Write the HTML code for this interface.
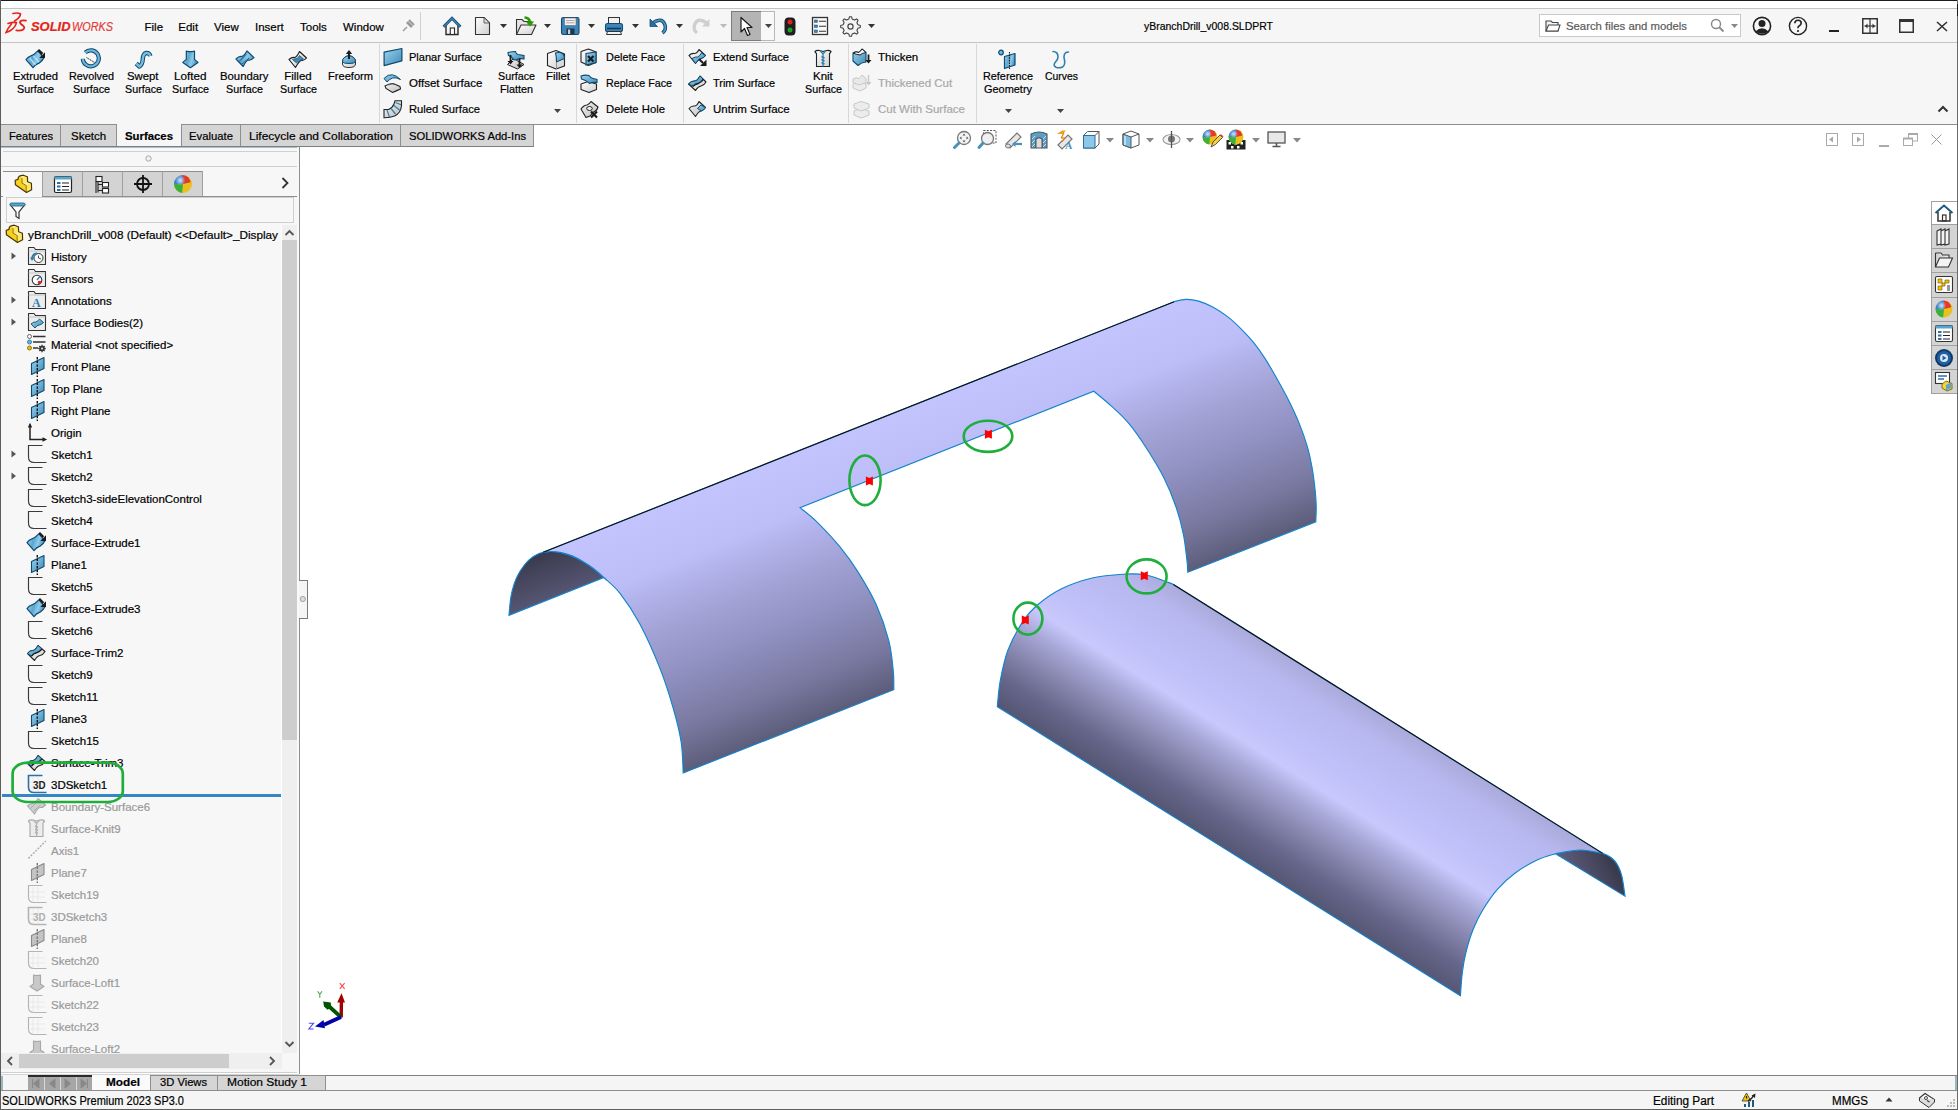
<!DOCTYPE html><html><head><meta charset="utf-8"><style>
html,body{margin:0;padding:0;width:1958px;height:1110px;overflow:hidden;background:#fff;}
body{position:relative;font-family:"Liberation Sans",sans-serif;}
.t{position:absolute;white-space:nowrap;line-height:16px;font-family:"Liberation Sans",sans-serif;-webkit-text-stroke:0.2px currentColor;}
.r{position:absolute;}
.s{position:absolute;overflow:visible;}

</style></head><body>
<div class="r" style="left:0px;top:0px;width:1958px;height:1px;background:#1c1c1c;"></div>
<div class="r" style="left:0px;top:1px;width:1958px;height:7px;background:#ffffff;"></div>
<div class="r" style="left:0px;top:8px;width:1958px;height:1px;background:#c3c3c3;"></div>
<div class="r" style="left:0px;top:9px;width:1958px;height:33px;background:#f6f6f6;"></div>
<div class="r" style="left:0px;top:42px;width:1958px;height:1px;background:#c3c3c3;"></div>
<div class="r" style="left:0px;top:43px;width:1958px;height:81px;background:#f6f6f6;"></div>
<div class="r" style="left:0px;top:124px;width:1958px;height:1px;background:#8e8e8e;"></div>
<div class="r" style="left:300px;top:125px;width:1657px;height:950px;background:#ffffff;"></div>
<div class="r" style="left:1px;top:125px;width:298px;height:949px;background:#f7f7f7;"></div>
<div class="r" style="left:299px;top:147px;width:1px;height:927px;background:#8e8e8e;"></div>
<svg width="0" height="0" style="position:absolute"><defs>
<linearGradient id="gb" x1="0" y1="0" x2="1" y2="0.3"><stop offset="0" stop-color="#a6dcf5"/><stop offset="0.45" stop-color="#5aa6d0"/><stop offset="0.7" stop-color="#8fcbea"/><stop offset="1" stop-color="#4d95c0"/></linearGradient>
<linearGradient id="gb2" x1="0" y1="0" x2="1" y2="1"><stop offset="0" stop-color="#9ad6f2"/><stop offset="1" stop-color="#3f88b6"/></linearGradient>
<linearGradient id="gw" x1="0" y1="0" x2="1" y2="1"><stop offset="0" stop-color="#ffffff"/><stop offset="1" stop-color="#cfcfcf"/></linearGradient>
<linearGradient id="gg" x1="0" y1="0" x2="1" y2="1"><stop offset="0" stop-color="#f4f4f4"/><stop offset="1" stop-color="#bdbdbd"/></linearGradient>
<radialGradient id="gball" cx="0.35" cy="0.3" r="0.7"><stop offset="0" stop-color="#fff" stop-opacity="0.8"/><stop offset="0.4" stop-color="#fff" stop-opacity="0"/></radialGradient>
</defs></svg>
<svg class="s" style="left:0px;top:0px;" width="120" height="40" viewBox="0 0 120 40">
<path d="M13 13.5Q18 12.3 20.5 14Q20.3 17.5 14.6 21" fill="none" stroke="#e1251b" stroke-width="1.7" stroke-linecap="round"/>
<path d="M8 23.4Q13 21.8 16.4 22.6Q15.6 27 10.5 30.5Q8 32 6 32.6Q7.5 28.5 11.5 24" fill="none" stroke="#e1251b" stroke-width="1.6" stroke-linecap="round"/>
<path d="M26 20.6Q21.5 20 20 21.6Q19.6 23.6 23 25.6Q25.6 27.6 22.8 29.8Q20 30.9 16.3 30.4" fill="none" stroke="#e1251b" stroke-width="1.8" stroke-linecap="round"/>
</svg>
<div class="t" style="left:31.0px;top:19.2px;font-size:12.5px;color:#e1251b;font-weight:bold;font-style:italic;transform:scaleX(1.0342);transform-origin:0 0;">SOLID</div>
<div class="t" style="left:72.0px;top:19.2px;font-size:12.5px;color:#e43a36;font-style:italic;transform:scaleX(0.8682);transform-origin:0 0;">WORKS</div>
<div class="t" style="left:144.5px;top:19.0px;font-size:11.5px;color:#000;">File</div>
<div class="t" style="left:178.3px;top:19.0px;font-size:11.5px;color:#000;">Edit</div>
<div class="t" style="left:214.0px;top:19.0px;font-size:11.5px;color:#000;">View</div>
<div class="t" style="left:255.0px;top:19.0px;font-size:11.5px;color:#000;">Insert</div>
<div class="t" style="left:300.0px;top:19.0px;font-size:11.5px;color:#000;">Tools</div>
<div class="t" style="left:343.0px;top:19.0px;font-size:11.5px;color:#000;">Window</div>
<svg class="s" style="left:400px;top:18px;" width="16" height="16" viewBox="0 0 16 16"><path d="M3 13L7 9" stroke="#999" stroke-width="1.5"/><path d="M6 5L11 10L13 8L8 3Z" fill="#999"/><path d="M9 2L14 7" stroke="#999" stroke-width="2"/></svg>
<div class="r" style="left:420px;top:12px;width:1px;height:28px;background:#d0d0d0;"></div>
<svg class="s" style="left:0px;top:0px;" width="900" height="42" viewBox="0 0 900 42">
<path d="M446 25V34.5H458V25" fill="#f4f4f4" stroke="#2a2a2a" stroke-width="1.4"/>
<rect x="450.3" y="28" width="4.2" height="6.5" fill="#fff" stroke="#2a2a2a" stroke-width="1.1"/>
<path d="M443.6 26.8L452 18.3L460.4 26.8" fill="none" stroke="#1b4f72" stroke-width="3"/>
<path d="M443.6 26.8L452 18.3L460.4 26.8" fill="none" stroke="#3b86b8" stroke-width="1.2"/>
<path d="M475.5 17.5H484L489.5 23V34.5H475.5Z" fill="url(#gw)" stroke="#333" stroke-width="1.1" stroke-linejoin="round"/>
<path d="M484 17.5V23H489.5Z" fill="#ddd" stroke="#444" stroke-width="0.8"/>
<path d="M516.5 19.5H522L524 21.5H531V34.5H516.5Z" fill="#e4e4e4" stroke="#333" stroke-width="1.1"/>
<path d="M516.5 34.5L521 25H536L531.5 34.5Z" fill="url(#gw)" stroke="#333" stroke-width="1.1" stroke-linejoin="round"/>
<path d="M524.5 17.5Q529.5 17.5 530 22.5" fill="none" stroke="#2a9a00" stroke-width="2.6"/>
<path d="M525.8 21.5H534.2L530 26.5Z" fill="#2a9a00"/>
<rect x="561.5" y="17.5" width="17.5" height="17" rx="1.8" fill="#3b85b8" stroke="#1a4a6e" stroke-width="1.1"/>
<rect x="564.5" y="18" width="11.5" height="7.5" fill="#f2f2f2" stroke="#666" stroke-width="0.6"/>
<path d="M566 20.5H574.5M566 22.8H574.5" stroke="#888" stroke-width="0.7"/>
<rect x="566.5" y="28.5" width="8" height="6" fill="#1c3850"/><rect x="568" y="29.5" width="2.2" height="4.5" fill="#d0d0d0"/>
<rect x="608.5" y="17.5" width="11" height="7" fill="#f0f0f0" stroke="#333" stroke-width="1"/>
<rect x="605.5" y="23.5" width="17" height="8" rx="2" fill="#3b85b8" stroke="#1a4a6e" stroke-width="1.1"/>
<path d="M607 28.5H621" stroke="#133a58" stroke-width="1.6"/>
<path d="M607.5 31.5H620.5L621.5 34.5H606.5Z" fill="#f2f2f2" stroke="#333" stroke-width="1"/>
<path d="M652.5 23Q662 16.5 665 25Q666.5 30 662.5 33" fill="none" stroke="#1b4f72" stroke-width="3.6"/>
<path d="M652.5 23Q662 16.5 665 25Q666.5 30 662.5 33" fill="none" stroke="#4a96c8" stroke-width="1.6"/>
<path d="M650 19V26.5H657.5Z" fill="#2a6fa0" stroke="#1b4f72" stroke-width="0.8"/>
<path d="M707 23Q697.5 16.5 694.5 25Q693 30 697 33" fill="none" stroke="#cfcfcf" stroke-width="3.4"/>
<path d="M709.5 19V26.5H702Z" fill="#cfcfcf"/>
<path d="M788.5 17.5H791.5Q795.5 17.5 795.5 22V31Q795.5 35.5 791.5 35.5H788.5Q784.5 35.5 784.5 31V22Q784.5 17.5 788.5 17.5Z" fill="#1e1e1e"/>
<circle cx="790" cy="22" r="2.5" fill="#e02020"/><circle cx="790" cy="30" r="2.5" fill="#20a020"/>
<rect x="812.5" y="17.5" width="15" height="17" fill="#f8f8f8" stroke="#333" stroke-width="1.3"/>
<rect x="814.5" y="20" width="3" height="2.5" fill="#3b85b8" stroke="#1a4a6e" stroke-width="0.5"/><rect x="814.5" y="25" width="3" height="2.5" fill="#3b85b8" stroke="#1a4a6e" stroke-width="0.5"/><rect x="814.5" y="30" width="3" height="2.5" fill="#3b85b8" stroke="#1a4a6e" stroke-width="0.5"/>
<path d="M819 21.2H826M819 26.2H826M819 31.2H826" stroke="#333" stroke-width="1.1"/>
<path d="M849.5 18.2L851.5 18.2L852.2 20.6L854.5 21.6L856.7 20.4L858.1 21.8L856.9 24L857.9 26.3L860.3 27L860.3 29L857.9 29.7L856.9 32L858.1 34.2L856.7 35.6L854.5 34.4L852.2 35.4L851.5 37.8L849.5 37.8L848.8 35.4L846.5 34.4L844.3 35.6L842.9 34.2L844.1 32L843.1 29.7L840.7 29L840.7 27L843.1 26.3L844.1 24L842.9 21.8L844.3 20.4L846.5 21.6L848.8 20.6Z" transform="translate(0,-1.5)" fill="#f4f4f4" stroke="#444" stroke-width="1.1" stroke-linejoin="round"/>
<circle cx="850.5" cy="26.5" r="2.6" fill="none" stroke="#444" stroke-width="1.2"/>
</svg>
<svg class="s" style="left:500px;top:24px;" width="7" height="4" viewBox="0 0 7 4"><path d="M0 0H7L3.5 4Z" fill="#333"/></svg>
<svg class="s" style="left:544px;top:24px;" width="7" height="4" viewBox="0 0 7 4"><path d="M0 0H7L3.5 4Z" fill="#333"/></svg>
<svg class="s" style="left:588px;top:24px;" width="7" height="4" viewBox="0 0 7 4"><path d="M0 0H7L3.5 4Z" fill="#333"/></svg>
<svg class="s" style="left:632px;top:24px;" width="7" height="4" viewBox="0 0 7 4"><path d="M0 0H7L3.5 4Z" fill="#333"/></svg>
<svg class="s" style="left:676px;top:24px;" width="7" height="4" viewBox="0 0 7 4"><path d="M0 0H7L3.5 4Z" fill="#333"/></svg>
<svg class="s" style="left:720px;top:24px;" width="7" height="4" viewBox="0 0 7 4"><path d="M0 0H7L3.5 4Z" fill="#bbb"/></svg>
<svg class="s" style="left:868px;top:24px;" width="7" height="4" viewBox="0 0 7 4"><path d="M0 0H7L3.5 4Z" fill="#333"/></svg>
<div class="r" style="left:731px;top:11px;width:31px;height:30px;background:#b4b4b4;border:1px solid #7c7c7c;box-sizing:border-box"></div>
<div class="r" style="left:761px;top:11px;width:14px;height:30px;background:#f8f8f8;border:1px solid #b8b8b8;border-left:none;box-sizing:border-box"></div>
<svg class="s" style="left:739px;top:16px;" width="16" height="22" viewBox="0 0 16 22"><path d="M2 1.5V16L5.5 12.5L8.5 19.5L11 18.5L8 11.5H13Z" fill="#fff" stroke="#1a1a1a" stroke-width="1.2" stroke-linejoin="round"/></svg>
<svg class="s" style="left:765px;top:24px;" width="7" height="4" viewBox="0 0 7 4"><path d="M0 0H7L3.5 4Z" fill="#444"/></svg>
<div class="t" style="left:1144.0px;top:18.0px;font-size:11.5px;color:#000;transform:scaleX(0.9105);transform-origin:0 0;">yBranchDrill_v008.SLDPRT</div>
<div class="r" style="left:1539px;top:14px;width:202px;height:23px;background:#ffffff;border:1px solid #c9c9c9;box-sizing:border-box"></div>
<svg class="s" style="left:1545px;top:19px;" width="16" height="13" viewBox="0 0 16 13"><path d="M1 2H6L7.5 3.5H13V12H1Z" fill="#f4f4f4" stroke="#444" stroke-width="1.1"/><path d="M1 12L3.5 6H15L13 12Z" fill="#fff" stroke="#444" stroke-width="1.1"/></svg>
<div class="t" style="left:1566.0px;top:18.0px;font-size:11.5px;color:#5a5a5a;transform:scaleX(0.9859);transform-origin:0 0;">Search files and models</div>
<svg class="s" style="left:1710px;top:18px;" width="15" height="15" viewBox="0 0 15 15"><circle cx="6" cy="6" r="4.5" fill="none" stroke="#888" stroke-width="1.4"/><path d="M9.5 9.5L13.5 13.5" stroke="#888" stroke-width="1.8"/></svg>
<svg class="s" style="left:1731px;top:24px;" width="7" height="4" viewBox="0 0 7 4"><path d="M0 0H7L3.5 4Z" fill="#888"/></svg>
<svg class="s" style="left:1752px;top:16px;" width="20" height="20" viewBox="0 0 20 20"><circle cx="10" cy="10" r="8.6" fill="none" stroke="#222" stroke-width="1.6"/><circle cx="10" cy="7.5" r="3.5" fill="#222"/><path d="M3.5 15.5Q10 9 16.5 15.5Q10 20 3.5 15.5Z" fill="#222"/></svg>
<svg class="s" style="left:1788px;top:16px;" width="20" height="20" viewBox="0 0 20 20"><circle cx="10" cy="10" r="8.6" fill="none" stroke="#222" stroke-width="1.4"/><path d="M6.8 7.3Q7 4.3 10 4.3Q13.2 4.3 13.2 7Q13.2 9 10.8 10.2Q10 10.8 10 12.3" fill="none" stroke="#222" stroke-width="1.6"/><circle cx="10" cy="15" r="1.1" fill="#222"/></svg>
<div class="r" style="left:1829px;top:30px;width:10px;height:2px;background:#222;"></div>
<svg class="s" style="left:1862px;top:18px;" width="16" height="16" viewBox="0 0 16 16"><rect x="0.75" y="0.75" width="14.5" height="14.5" fill="none" stroke="#333" stroke-width="1.5"/><path d="M8 1V15" stroke="#333" stroke-width="1.2"/><path d="M2.5 8H13.5" stroke="#333" stroke-width="1.2"/><path d="M3 8L5.5 5.5V10.5Z M13 8L10.5 5.5V10.5Z" fill="#333"/></svg>
<svg class="s" style="left:1899px;top:19px;" width="15" height="14" viewBox="0 0 15 14"><rect x="0.75" y="0.75" width="13.5" height="12.5" fill="none" stroke="#333" stroke-width="1.5"/><rect x="0" y="0" width="15" height="3" fill="#333"/></svg>
<svg class="s" style="left:1936px;top:21px;" width="12" height="11" viewBox="0 0 12 11"><path d="M1 1L11 10M11 1L1 10" stroke="#333" stroke-width="1.6"/></svg>
<div class="t" style="left:12.5px;top:68.0px;font-size:11.5px;color:#000;transform:scaleX(0.9776);transform-origin:0 0;">Extruded</div>
<div class="t" style="left:16.5px;top:81.0px;font-size:11.5px;color:#000;transform:scaleX(0.9336);transform-origin:0 0;">Surface</div>
<svg class="s" style="left:25px;top:49px;" width="20" height="20" viewBox="0 0 20 20"><path d="M1 10.6C2.5 8.5 4.3 7.4 6 6.8C8 6.3 9.5 5 11.2 3.3L13 1.9L19 8.8C18 11 17 12.3 14 14.2C12 15 10 15.5 8 18.7Z" fill="url(#gb)" stroke="#0f4a6e" stroke-width="1.2" stroke-linejoin="round"/>
<path d="M5 9.5L10.5 16M8.5 7L14 13" stroke="#cdeaf8" stroke-width="1.2" opacity="0.8"/>
<path d="M13.2 0.8L17.4 5" stroke="#1a1a1a" stroke-width="2.5"/><path d="M20 3.2V8.9H14.3Z" fill="#1a1a1a"/></svg>
<div class="t" style="left:68.5px;top:68.0px;font-size:11.5px;color:#000;transform:scaleX(0.9386);transform-origin:0 0;">Revolved</div>
<div class="t" style="left:72.5px;top:81.0px;font-size:11.5px;color:#000;transform:scaleX(0.9336);transform-origin:0 0;">Surface</div>
<svg class="s" style="left:81px;top:49px;" width="20" height="20" viewBox="0 0 20 20"><path d="M4.2 3.6A8 8 0 1 1 1.8 9.8" fill="none" stroke="#0f4a6e" stroke-width="4.2"/>
<path d="M4.2 3.6A8 8 0 1 1 1.8 9.8" fill="none" stroke="#6db5dc" stroke-width="2.2"/>
<path d="M5.5 8.5L14 13.8" stroke="#1a1a1a" stroke-width="0.9" stroke-dasharray="1.4 0.6"/></svg>
<div class="t" style="left:127.2px;top:68.0px;font-size:11.5px;color:#000;transform:scaleX(0.9855);transform-origin:0 0;">Swept</div>
<div class="t" style="left:124.5px;top:81.0px;font-size:11.5px;color:#000;transform:scaleX(0.9336);transform-origin:0 0;">Surface</div>
<svg class="s" style="left:133px;top:49px;" width="20" height="20" viewBox="0 0 20 20"><path d="M3.2 14.5L6.5 17.5Q9.5 15.5 9.8 10Q10.2 4.5 13.2 4Q16.5 3.8 17.3 7" fill="none" stroke="#0f4a6e" stroke-width="4.4" stroke-linejoin="round"/>
<path d="M3.2 14.5L6.5 17.5Q9.5 15.5 9.8 10Q10.2 4.5 13.2 4Q16.5 3.8 17.3 7" fill="none" stroke="#79bde0" stroke-width="2.4" stroke-linejoin="round"/></svg>
<div class="t" style="left:174.2px;top:68.0px;font-size:11.5px;color:#000;transform:scaleX(1.0164);transform-origin:0 0;">Lofted</div>
<div class="t" style="left:172.0px;top:81.0px;font-size:11.5px;color:#000;transform:scaleX(0.9336);transform-origin:0 0;">Surface</div>
<svg class="s" style="left:180px;top:49px;" width="20" height="20" viewBox="0 0 20 20"><path d="M6.3 2.1Q10.4 3.2 14.5 2.1V10.4L18 13.4L10.4 18.7L2.8 13.4L6.3 10.4Z" fill="url(#gb)" stroke="#0f4a6e" stroke-width="1.2" stroke-linejoin="round"/></svg>
<div class="t" style="left:220.4px;top:68.0px;font-size:11.5px;color:#000;transform:scaleX(0.9852);transform-origin:0 0;">Boundary</div>
<div class="t" style="left:226.2px;top:81.0px;font-size:11.5px;color:#000;transform:scaleX(0.9336);transform-origin:0 0;">Surface</div>
<svg class="s" style="left:235px;top:49px;" width="20" height="20" viewBox="0 0 20 20"><path d="M1 10Q4 7 6.5 7.5Q9 7 12 2L19 8.6Q16 11.5 13.5 11Q11 11.5 8.2 17.5Z" fill="url(#gb)" stroke="#0f4a6e" stroke-width="1.2" stroke-linejoin="round"/>
<path d="M4 12.5L11 5.5M7 15L14 9" stroke="#0f4a6e" stroke-width="0.9"/></svg>
<div class="t" style="left:284.2px;top:68.0px;font-size:11.5px;color:#000;">Filled</div>
<div class="t" style="left:279.5px;top:81.0px;font-size:11.5px;color:#000;transform:scaleX(0.9336);transform-origin:0 0;">Surface</div>
<svg class="s" style="left:288px;top:49px;" width="20" height="20" viewBox="0 0 20 20"><path d="M1 10.5Q4 8 6.5 8.5Q9 8 11.5 2.5L18.5 9Q16 12 13.5 11.5Q11 12 7.5 18.5Z" fill="url(#gw)" stroke="#1a1a1a" stroke-width="1.1" stroke-linejoin="round"/>
<path d="M4.5 10.5Q7 9.5 9 9.5Q10.5 8.5 11.5 6.5L15.5 10Q13 11.5 11.5 11.5Q9.5 12.5 8.5 14Z" fill="#3f8ab8" stroke="#0f4a6e" stroke-width="0.7"/></svg>
<div class="t" style="left:327.5px;top:68.0px;font-size:11.5px;color:#000;transform:scaleX(0.9647);transform-origin:0 0;">Freeform</div>
<svg class="s" style="left:340px;top:49px;" width="20" height="20" viewBox="0 0 20 20"><path d="M2.5 12.5Q2.5 8 9 6.5Q15.5 8 15.5 12.5V15Q15.5 18.5 9 18.5Q2.5 18.5 2.5 15Z" fill="url(#gw)" stroke="#333" stroke-width="1"/>
<path d="M2.5 12.5Q2.5 8 9 6.5Q15.5 8 15.5 12.5Q15 14.5 9 14.5Q3 14.5 2.5 12.5Z" fill="url(#gb2)" stroke="#0f4a6e" stroke-width="1"/>
<path d="M9 10V3" stroke="#1a1a1a" stroke-width="2"/><path d="M5.8 5H12.2L9 1Z" fill="#1a1a1a"/></svg>
<div class="r" style="left:379px;top:44px;width:1px;height:79px;background:#d8d8d8;"></div>
<div class="t" style="left:409.0px;top:49.0px;font-size:11.5px;color:#000;transform:scaleX(0.9596);transform-origin:0 0;">Planar Surface</div>
<div class="t" style="left:409.0px;top:75.0px;font-size:11.5px;color:#000;">Offset Surface</div>
<div class="t" style="left:409.0px;top:101.0px;font-size:11.5px;color:#000;transform:scaleX(0.9743);transform-origin:0 0;">Ruled Surface</div>
<svg class="s" style="left:383px;top:48px;" width="19" height="19" viewBox="0 0 19 19"><path d="M1.1 4.2L18.9 0.5V12.8L1.1 17.6Z" fill="url(#gb2)" stroke="#0f4a6e" stroke-width="1.2" stroke-linejoin="round"/></svg>
<svg class="s" style="left:383px;top:74px;" width="19" height="19" viewBox="0 0 19 19"><path d="M2 12Q6 9.5 9.5 9.5Q13 10.5 17 12.5L17.5 15Q13 17 9.5 18.5L3 14.5Z" fill="url(#gg)" stroke="#222" stroke-width="1.1"/>
<path d="M5.5 11Q9.5 8.5 13 10.5" fill="none" stroke="#555" stroke-width="0.9"/>
<path d="M1 4.5Q5 0 9.5 0.8Q13.5 1.5 17.5 5.5Q13 3 9.5 4Q6 5.5 4 8Z" fill="url(#gb2)" stroke="#0f4a6e" stroke-width="1"/></svg>
<svg class="s" style="left:383px;top:100px;" width="19" height="19" viewBox="0 0 19 19"><path d="M1 9.5H5.5Q9.5 8 11 4Q12 1.5 12 0.7H18.5V5.5Q18 13 11.5 16Q7 17.8 1 17.7Z" fill="url(#gg)" stroke="#222" stroke-width="1.1"/>
<path d="M4 10L6.5 17M8 8.5L12.5 14M11 5.5L16.5 10M12.5 2.5L18 4.8" stroke="#2f7fae" stroke-width="1.2"/></svg>
<div class="t" style="left:497.5px;top:68.0px;font-size:11.5px;color:#000;transform:scaleX(0.9336);transform-origin:0 0;">Surface</div>
<div class="t" style="left:499.5px;top:81.0px;font-size:11.5px;color:#000;transform:scaleX(0.9386);transform-origin:0 0;">Flatten</div>
<svg class="s" style="left:506px;top:49px;" width="20" height="20" viewBox="0 0 20 20"><path d="M1.5 15.5L7.5 9.5L18 15.5L11.5 20Z" fill="url(#gg)" stroke="#222" stroke-width="1"/>
<path d="M2 3.5Q6 2.5 9.5 2.5Q10 5 12 5.5L18 6.5V10Q14 9 11 10.5L8 11Q6.5 8 2.5 6.5Z" fill="url(#gb2)" stroke="#0f4a6e" stroke-width="1.1"/>
<path d="M4.5 6V13M13.5 9.5V16.5" stroke="#1a1a1a" stroke-width="1.8"/><path d="M1.5 12H7.5L4.5 15.5ZM10.5 15.5H16.5L13.5 19Z" fill="#1a1a1a"/></svg>
<div class="t" style="left:545.5px;top:68.0px;font-size:11.5px;color:#000;transform:scaleX(0.9884);transform-origin:0 0;">Fillet</div>
<svg class="s" style="left:546px;top:49px;" width="20" height="20" viewBox="0 0 20 20"><path d="M1.5 4.5L10 1.5L18.5 5V17L10 20L1.5 16.5Z" fill="url(#gw)" stroke="#222" stroke-width="1.1" stroke-linejoin="round"/>
<path d="M9.5 4Q14 2.5 17 5Q18.5 7 18.5 9.5L10.5 13Q10.5 7 9.5 4Z" fill="url(#gb2)" stroke="#0f4a6e" stroke-width="1.1"/>
<path d="M10.5 13V20" stroke="#888" stroke-width="0.9"/></svg>
<svg class="s" style="left:554px;top:109px;" width="7" height="4" viewBox="0 0 7 4"><path d="M0 0H7L3.5 4Z" fill="#444"/></svg>
<div class="r" style="left:576px;top:44px;width:1px;height:79px;background:#d8d8d8;"></div>
<div class="t" style="left:606.0px;top:49.0px;font-size:11.5px;color:#000;transform:scaleX(0.9515);transform-origin:0 0;">Delete Face</div>
<svg class="s" style="left:580px;top:48px;" width="19" height="19" viewBox="0 0 19 19"><path d="M1 3.5L8.5 1L16 4V14.5L8.5 17.5L1 14Z" fill="url(#gw)" stroke="#222" stroke-width="1.1" stroke-linejoin="round"/>
<path d="M6 5.5L16 4V14.5L6 17Z" fill="url(#gb2)" stroke="#0f4a6e" stroke-width="1.1"/>
<path d="M8 8L13.5 13.5M13.5 8L8 13.5" stroke="#1a1a1a" stroke-width="2.2"/></svg>
<div class="t" style="left:606.0px;top:75.0px;font-size:11.5px;color:#000;transform:scaleX(0.9302);transform-origin:0 0;">Replace Face</div>
<svg class="s" style="left:580px;top:74px;" width="19" height="19" viewBox="0 0 19 19"><path d="M1 10L8 7.5L16.5 10V15.5L9 18.5L1 15.5Z" fill="url(#gw)" stroke="#222" stroke-width="1.1" stroke-linejoin="round"/>
<path d="M1 2Q5 0.5 9 1.5Q10.5 4 13 4.5L17 5.5V8.5Q12 8 9.5 9.5Q7.5 7 1.5 5Z" fill="url(#gb2)" stroke="#0f4a6e" stroke-width="1.1"/></svg>
<div class="t" style="left:606.0px;top:101.0px;font-size:11.5px;color:#000;transform:scaleX(0.9819);transform-origin:0 0;">Delete Hole</div>
<svg class="s" style="left:580px;top:100px;" width="19" height="19" viewBox="0 0 19 19"><path d="M1 9Q4 5 7 5Q9 4.5 11 1.5L18 7Q17 10.5 15 11Q13 12 10 16L6 17.5Z" fill="url(#gg)" stroke="#222" stroke-width="1.1" stroke-linejoin="round"/>
<ellipse cx="9.5" cy="8.5" rx="2.8" ry="2" fill="#f0f0f0" stroke="#222" stroke-width="1"/>
<path d="M11 11.5L17 17.5M17 11.5L11 17.5" stroke="#1a1a1a" stroke-width="2.2"/></svg>
<div class="r" style="left:683px;top:44px;width:1px;height:79px;background:#d8d8d8;"></div>
<div class="t" style="left:713.0px;top:49.0px;font-size:11.5px;color:#000;transform:scaleX(0.9665);transform-origin:0 0;">Extend Surface</div>
<svg class="s" style="left:688px;top:48px;" width="19" height="19" viewBox="0 0 19 19"><path d="M1 7.5Q3.5 5 6.5 5.5Q9 5.5 11 1.5L17.5 7.5Q15.5 10 13 10.5Q10.5 11 7.5 15.5Z" fill="url(#gw)" stroke="#222" stroke-width="1.1" stroke-linejoin="round"/>
<path d="M4 10.5Q7.5 8.5 9.5 9Q11.5 8.5 13.5 5L17.5 7.5Q15.5 10 13 10.5Q10.5 11 7.5 15.5Z" fill="url(#gb2)" stroke="#0f4a6e" stroke-width="1"/>
<path d="M11 11L15 15" stroke="#1a1a1a" stroke-width="2"/><path d="M12 18H18.5V11.5Z" fill="#1a1a1a"/></svg>
<div class="t" style="left:713.0px;top:75.0px;font-size:11.5px;color:#000;transform:scaleX(0.9481);transform-origin:0 0;">Trim Surface</div>
<svg class="s" style="left:688px;top:74px;" width="19" height="19" viewBox="0 0 19 19"><path d="M0.5 10Q3.5 6.5 7 7Q9.5 7 12 2L18 8Q16 11.5 13 12Q10 12.5 7.5 16.5Z" fill="url(#gw)" stroke="#222" stroke-width="1.1" stroke-linejoin="round"/>
<path d="M0.5 10Q3.5 6.5 7 7Q9.5 7 12 2L15 5Q13 8 10.5 9Q7.5 9.5 5 12Z" fill="url(#gb2)" stroke="#0f4a6e" stroke-width="1"/>
<path d="M4.5 12.5Q7.5 10 10.5 9.5Q13.5 8.5 15.5 5.5" fill="none" stroke="#222" stroke-width="1.3"/></svg>
<div class="t" style="left:713.0px;top:101.0px;font-size:11.5px;color:#000;">Untrim Surface</div>
<svg class="s" style="left:688px;top:100px;" width="19" height="19" viewBox="0 0 19 19"><path d="M1 8.5Q3.5 5.5 6.5 6Q9 6 11 1.5L17.5 7.5Q15.5 10.5 13 11Q10.5 11.5 7.5 16.5Z" fill="url(#gg)" stroke="#222" stroke-width="1.1" stroke-linejoin="round"/>
<path d="M9.5 8.5L13 5L17.5 7.5Q16 10 13.5 11Z" fill="url(#gb2)" stroke="#0f4a6e" stroke-width="1"/></svg>
<div class="t" style="left:813.0px;top:68.0px;font-size:11.5px;color:#000;">Knit</div>
<div class="t" style="left:804.5px;top:81.0px;font-size:11.5px;color:#000;transform:scaleX(0.9336);transform-origin:0 0;">Surface</div>
<svg class="s" style="left:813px;top:49px;" width="20" height="20" viewBox="0 0 20 20"><path d="M2 2.5Q3.5 1 6.5 1.5L10 2.5L13.5 1.5Q16.5 1 18 2.5Q17.5 4 16.5 4.5V17.5H3.5V4.5Q2.5 4 2 2.5Z" fill="url(#gw)" stroke="#222" stroke-width="1.1"/>
<path d="M7 1.5L10 5L13 1.5M10 5V17.5" fill="none" stroke="#2f7fae" stroke-width="1.3"/>
<path d="M8.5 7.5L11.5 9M8.5 10.5L11.5 12M8.5 13.5L11.5 15" stroke="#2f7fae" stroke-width="1.5"/></svg>
<div class="r" style="left:848px;top:44px;width:1px;height:79px;background:#d8d8d8;"></div>
<div class="t" style="left:878.0px;top:49.0px;font-size:11.5px;color:#000;">Thicken</div>
<svg class="s" style="left:852px;top:48px;" width="19" height="19" viewBox="0 0 19 19"><path d="M1 5Q4 3 7 4.5Q9.5 2 10 1L14 4.5V14Q9 14.5 6 17.5L1 13Z" fill="url(#gb2)" stroke="#0f4a6e" stroke-width="1.1" stroke-linejoin="round"/>
<path d="M1 5Q4 3 7 4.5Q9.5 2 10 1L14 4.5Q10 5 8 7Q4 6.5 1 5Z" fill="#f4f4f4" stroke="#222" stroke-width="1"/>
<path d="M16.5 6.5V13" stroke="#1a1a1a" stroke-width="1.8"/><path d="M13.5 12H19.5L16.5 15.5Z" fill="#1a1a1a"/></svg>
<div class="t" style="left:878.0px;top:75.0px;font-size:11.5px;color:#a8a8a8;">Thickened Cut</div>
<svg class="s" style="left:852px;top:74px;" width="19" height="19" viewBox="0 0 19 19"><path d="M1 10L8 7.5L14 10V14L8 17L1 14Z" fill="#ececec" stroke="#c8c8c8" stroke-width="1"/>
<path d="M1 5Q4 3 7 4.5Q9.5 2 10 1L14 4.5V9Q10 9.5 7 11L1 8.5Z" fill="#e8e8e8" stroke="#c8c8c8" stroke-width="1"/>
<path d="M16.5 1V9" stroke="#c8c8c8" stroke-width="1.5"/><path d="M13.5 8H19.5L16.5 11.5Z" fill="#c8c8c8"/></svg>
<div class="t" style="left:878.0px;top:101.0px;font-size:11.5px;color:#a8a8a8;">Cut With Surface</div>
<svg class="s" style="left:852px;top:100px;" width="19" height="19" viewBox="0 0 19 19"><path d="M2 11L9 8.5L17 11V15L9 18L2 15Z" fill="#ececec" stroke="#c8c8c8" stroke-width="1"/>
<path d="M2 4L9 1.5L17 4V8L9 11L2 8Z" fill="#ececec" stroke="#c8c8c8" stroke-width="1"/></svg>
<div class="r" style="left:976px;top:44px;width:1px;height:79px;background:#d8d8d8;"></div>
<div class="t" style="left:983.0px;top:68.0px;font-size:11.5px;color:#000;transform:scaleX(0.9423);transform-origin:0 0;">Reference</div>
<div class="t" style="left:984.0px;top:81.0px;font-size:11.5px;color:#000;transform:scaleX(0.9507);transform-origin:0 0;">Geometry</div>
<svg class="s" style="left:998px;top:49px;" width="20" height="20" viewBox="0 0 20 20"><circle cx="3" cy="3.5" r="2.3" fill="#6ab8e0" stroke="#0f4a6e" stroke-width="1.2"/>
<path d="M6.5 7.5L17 4.5V16L6.5 19.5Z" fill="url(#gb)" stroke="#0f4a6e" stroke-width="1.2" stroke-linejoin="round"/>
<path d="M11.5 3V20" stroke="#1a1a1a" stroke-width="1.1" stroke-dasharray="1.6 1"/></svg>
<svg class="s" style="left:1005px;top:109px;" width="7" height="4" viewBox="0 0 7 4"><path d="M0 0H7L3.5 4Z" fill="#444"/></svg>
<div class="t" style="left:1044.5px;top:68.0px;font-size:11.5px;color:#000;transform:scaleX(0.9059);transform-origin:0 0;">Curves</div>
<svg class="s" style="left:1050px;top:49px;" width="20" height="20" viewBox="0 0 20 20"><path d="M3 2.5Q8 2.5 8 8Q8 10.5 5.5 13Q2.5 16.5 6 18.2Q9 19.5 12.5 18Q15.5 16 14.5 11Q13.5 7.5 14.5 5Q15.5 3 18.5 3" fill="none" stroke="#2f7fae" stroke-width="1.6" stroke-linecap="round"/></svg>
<svg class="s" style="left:1057px;top:109px;" width="7" height="4" viewBox="0 0 7 4"><path d="M0 0H7L3.5 4Z" fill="#444"/></svg>
<svg class="s" style="left:1937px;top:105px;" width="12" height="8" viewBox="0 0 12 8"><path d="M1.5 6.5L6 2L10.5 6.5" fill="none" stroke="#333" stroke-width="2"/></svg>
<div class="r" style="left:1px;top:125px;width:533px;height:21px;background:#d5d5d5;"></div>
<div class="r" style="left:1px;top:146px;width:533px;height:1px;background:#7e7e7e;"></div>
<div class="r" style="left:117px;top:124px;width:64px;height:22px;background:#f6f6f6;"></div>
<div class="r" style="left:60px;top:125px;width:1px;height:21px;background:#8e8e8e;"></div>
<div class="r" style="left:116px;top:125px;width:1px;height:21px;background:#8e8e8e;"></div>
<div class="r" style="left:181px;top:125px;width:1px;height:21px;background:#8e8e8e;"></div>
<div class="r" style="left:240px;top:125px;width:1px;height:21px;background:#8e8e8e;"></div>
<div class="r" style="left:400px;top:125px;width:1px;height:21px;background:#8e8e8e;"></div>
<div class="r" style="left:533px;top:125px;width:1px;height:21px;background:#8e8e8e;"></div>
<div class="r" style="left:534px;top:124px;width:1px;height:1px;background:#8e8e8e;"></div>
<div class="t" style="left:9.0px;top:128.0px;font-size:11.5px;color:#000;transform:scaleX(0.9695);transform-origin:0 0;">Features</div>
<div class="t" style="left:71.0px;top:128.0px;font-size:11.5px;color:#000;">Sketch</div>
<div class="t" style="left:125.0px;top:128.0px;font-size:11.5px;color:#000;font-weight:bold;transform:scaleX(0.9880);transform-origin:0 0;">Surfaces</div>
<div class="t" style="left:189.0px;top:128.0px;font-size:11.5px;color:#000;transform:scaleX(0.9831);transform-origin:0 0;">Evaluate</div>
<div class="t" style="left:249.0px;top:128.0px;font-size:11.5px;color:#000;transform:scaleX(1.0428);transform-origin:0 0;">Lifecycle and Collaboration</div>
<div class="t" style="left:409.0px;top:128.0px;font-size:11.5px;color:#000;transform:scaleX(0.9738);transform-origin:0 0;">SOLIDWORKS Add-Ins</div>
<div class="r" style="left:534px;top:125px;width:1423px;height:22px;background:#ffffff;"></div>
<div class="r" style="left:1px;top:147px;width:298px;height:1px;background:#a9c4cc;"></div>
<div class="r" style="left:3px;top:151px;width:294px;height:1px;background:#d0d0d0;"></div>
<svg class="s" style="left:145px;top:155px;" width="7" height="7" viewBox="0 0 7 7"><circle cx="3.5" cy="3.5" r="2.7" fill="#f0f0f0" stroke="#aaa"/></svg>
<div class="r" style="left:1px;top:166px;width:296px;height:1px;background:#cfcfcf;"></div>
<div class="r" style="left:3px;top:171px;width:200px;height:1px;background:#8e8e8e;"></div>
<div class="r" style="left:42px;top:172px;width:160px;height:24px;background:#d3d3d3;"></div>
<div class="r" style="left:42px;top:171px;width:1px;height:25px;background:#a0a0a0;"></div>
<div class="r" style="left:82px;top:171px;width:1px;height:25px;background:#a0a0a0;"></div>
<div class="r" style="left:122px;top:171px;width:1px;height:25px;background:#a0a0a0;"></div>
<div class="r" style="left:162px;top:171px;width:1px;height:25px;background:#a0a0a0;"></div>
<div class="r" style="left:202px;top:171px;width:1px;height:25px;background:#a0a0a0;"></div>
<div class="r" style="left:1px;top:196px;width:296px;height:1px;background:#8e8e8e;"></div>
<div class="r" style="left:3px;top:196px;width:39px;height:1px;background:#f7f7f7;"></div>
<svg class="s" style="left:14px;top:174px;" width="20" height="20" viewBox="0 0 20 20"><path d="M1.2 6.3L4 5.4L4.3 3.3L5.4 2.1L9.2 1.2L13.4 2.8L13.6 7.7L17.4 9.3L17.6 15.7L12.5 18.5L1.4 10.8Z" fill="#f7d020"/><path d="M8 4L13.4 2.8L13.6 7.7L8.2 9.1Z M12.2 11.5L17.4 9.3L17.6 15.7L12.5 18.5Z" fill="#ffe860"/><path d="M5.4 2.1L9.2 1.2L13.4 2.8L8 4Z M8.2 9.1L13.6 7.7L17.4 9.3L12.2 11.5Z" fill="#fff0a0"/><path d="M8 4V9.1L12.2 11.5V18.3" fill="none" stroke="#8a6a10" stroke-width="0.9"/><path d="M1.2 6.3L4 5.4L4.3 3.3L5.4 2.1L9.2 1.2L13.4 2.8L13.6 7.7L17.4 9.3L17.6 15.7L12.5 18.5L1.4 10.8Z" fill="none" stroke="#4a3400" stroke-width="1.2" stroke-linejoin="round"/></svg>
<svg class="s" style="left:53px;top:175px;" width="20" height="19" viewBox="0 0 20 19"><rect x="1.5" y="1.5" width="17" height="16" rx="1.5" fill="#fff" stroke="#222" stroke-width="1.2"/><rect x="1.5" y="1.5" width="17" height="3" fill="#5aa5cc"/><rect x="4" y="7" width="3.5" height="2" fill="#2f6f9f"/><rect x="4" y="10.5" width="3.5" height="2" fill="#2f6f9f"/><rect x="4" y="14" width="3.5" height="2" fill="#2f6f9f"/><path d="M9 8H16M9 11.5H16M9 15H16" stroke="#222" stroke-width="1.1"/></svg>
<svg class="s" style="left:94px;top:175px;" width="18" height="19" viewBox="0 0 18 19"><rect x="2" y="1.5" width="6" height="5" fill="#fff" stroke="#222" stroke-width="1.1"/><rect x="8.5" y="7.5" width="6" height="4.5" fill="#fff" stroke="#222" stroke-width="1.1"/><rect x="8.5" y="13.5" width="6" height="4.5" fill="#fff" stroke="#222" stroke-width="1.1"/><path d="M4 6.5V17.5M4 9.5H8.5M4 15.5H8.5" stroke="#222" stroke-width="1.1"/><path d="M2 6.5V18" stroke="#222" stroke-width="1.1"/></svg>
<svg class="s" style="left:133px;top:174px;" width="20" height="20" viewBox="0 0 20 20"><circle cx="10" cy="10" r="6" fill="none" stroke="#111" stroke-width="1.8"/><path d="M10 1V19M1 10H19" stroke="#111" stroke-width="1.8"/></svg>
<svg class="s" style="left:173px;top:174px;" width="20" height="20" viewBox="0 0 20 20"><circle cx="10" cy="10" r="9" fill="#e8c020"/><path d="M10 10L1 10A9 9 0 0 1 10 1Z" fill="#3a7fd8"/><path d="M10 10L10 1A9 9 0 0 1 17.65 8.2Z" fill="#e03a30"/><path d="M10 10L1 10A9 9 0 0 0 9.1 19Z" fill="#3bb03b"/><circle cx="10" cy="10" r="9" fill="url(#gball)"/></svg>
<svg class="s" style="left:280px;top:176px;" width="10" height="14" viewBox="0 0 10 14"><path d="M2.5 2L7.5 7L2.5 12" fill="none" stroke="#333" stroke-width="1.8"/></svg>
<div class="r" style="left:6px;top:197px;width:288px;height:26px;background:#f7f7f7;border:1px solid #cfcfcf;box-sizing:border-box"></div>
<svg class="s" style="left:9px;top:202px;" width="17" height="18" viewBox="0 0 17 18"><path d="M1.5 3H15.5L10 10V16.5L7 14.5V10Z" fill="#fff" stroke="#333" stroke-width="1.2"/><rect x="1" y="1" width="15" height="3" rx="1.2" fill="#5aa5cc" stroke="#1f5a80" stroke-width="0.8"/></svg>
<div class="t" style="left:28.0px;top:227.0px;font-size:11.5px;color:#000;transform:scaleX(1.0225);transform-origin:0 0;">yBranchDrill_v008 (Default) &lt;&lt;Default&gt;_Display</div>
<svg class="s" style="left:5px;top:224px;" width="20" height="20" viewBox="0 0 20 20"><path d="M1.2 6.3L4 5.4L4.3 3.3L5.4 2.1L9.2 1.2L13.4 2.8L13.6 7.7L17.4 9.3L17.6 15.7L12.5 18.5L1.4 10.8Z" fill="#f7d020"/><path d="M8 4L13.4 2.8L13.6 7.7L8.2 9.1Z M12.2 11.5L17.4 9.3L17.6 15.7L12.5 18.5Z" fill="#ffe860"/><path d="M5.4 2.1L9.2 1.2L13.4 2.8L8 4Z M8.2 9.1L13.6 7.7L17.4 9.3L12.2 11.5Z" fill="#fff0a0"/><path d="M8 4V9.1L12.2 11.5V18.3" fill="none" stroke="#8a6a10" stroke-width="0.9"/><path d="M1.2 6.3L4 5.4L4.3 3.3L5.4 2.1L9.2 1.2L13.4 2.8L13.6 7.7L17.4 9.3L17.6 15.7L12.5 18.5L1.4 10.8Z" fill="none" stroke="#4a3400" stroke-width="1.2" stroke-linejoin="round"/></svg>
<div class="r" style="left:281px;top:225px;width:1px;height:828px;background:#fdfdfd;"></div>
<div class="r" style="left:282px;top:225px;width:15px;height:828px;background:#efefef;"></div>
<div class="r" style="left:282px;top:240px;width:15px;height:500px;background:#cdcdcd;"></div>
<svg class="s" style="left:283px;top:228px;" width="13" height="9" viewBox="0 0 13 9"><path d="M2.5 7L6.5 3L10.5 7" fill="none" stroke="#555" stroke-width="1.8"/></svg>
<svg class="s" style="left:283px;top:1040px;" width="13" height="9" viewBox="0 0 13 9"><path d="M2.5 2L6.5 6L10.5 2" fill="none" stroke="#555" stroke-width="1.8"/></svg>
<svg class="s" style="left:11px;top:252px;" width="6" height="8" viewBox="0 0 6 8"><path d="M0.5 0.5L5 4L0.5 7.5Z" fill="#555"/></svg>
<svg class="s" style="left:26px;top:246px;" width="22" height="22" viewBox="0 0 22 22"><path d="M2.5 1.5H8L9.5 3.5H19.5V18.5H2.5Z" fill="#ececec" stroke="#333" stroke-width="1.1" stroke-linejoin="round"/><path d="M2.5 5H19.5" stroke="#bbb" stroke-width="0.8"/><circle cx="12.5" cy="12" r="4.5" fill="#fff" stroke="#333" stroke-width="1"/><path d="M12.5 9.5V12L15 13" stroke="#333" stroke-width="0.9" fill="none"/><path d="M6 12Q7 7.5 11 7.5" fill="none" stroke="#2f7fae" stroke-width="1.8"/><path d="M4 11.5H8.5L6 15Z" fill="#2f7fae"/></svg>
<div class="t" style="left:51.0px;top:249.0px;font-size:11.5px;color:#000;">History</div>
<svg class="s" style="left:26px;top:268px;" width="22" height="22" viewBox="0 0 22 22"><path d="M2.5 1.5H8L9.5 3.5H19.5V18.5H2.5Z" fill="#ececec" stroke="#333" stroke-width="1.1" stroke-linejoin="round"/><path d="M2.5 5H19.5" stroke="#bbb" stroke-width="0.8"/><circle cx="11" cy="12" r="4.8" fill="#fff" stroke="#333" stroke-width="1.1"/><path d="M11 12L14 8.5" stroke="#2f7fae" stroke-width="1.3"/><circle cx="13.5" cy="14.5" r="1.8" fill="#e02020"/></svg>
<div class="t" style="left:51.0px;top:271.0px;font-size:11.5px;color:#000;">Sensors</div>
<svg class="s" style="left:11px;top:296px;" width="6" height="8" viewBox="0 0 6 8"><path d="M0.5 0.5L5 4L0.5 7.5Z" fill="#555"/></svg>
<svg class="s" style="left:26px;top:290px;" width="22" height="22" viewBox="0 0 22 22"><path d="M2.5 1.5H8L9.5 3.5H19.5V18.5H2.5Z" fill="#ececec" stroke="#333" stroke-width="1.1" stroke-linejoin="round"/><path d="M2.5 5H19.5" stroke="#bbb" stroke-width="0.8"/><text x="6" y="17" font-family="Liberation Serif" font-weight="bold" font-size="12" fill="#2f7fae">A</text></svg>
<div class="t" style="left:51.0px;top:293.0px;font-size:11.5px;color:#000;">Annotations</div>
<svg class="s" style="left:11px;top:318px;" width="6" height="8" viewBox="0 0 6 8"><path d="M0.5 0.5L5 4L0.5 7.5Z" fill="#555"/></svg>
<svg class="s" style="left:26px;top:312px;" width="22" height="22" viewBox="0 0 22 22"><path d="M2.5 1.5H8L9.5 3.5H19.5V18.5H2.5Z" fill="#ececec" stroke="#333" stroke-width="1.1" stroke-linejoin="round"/><path d="M2.5 5H19.5" stroke="#bbb" stroke-width="0.8"/><path d="M5 12Q7.5 9.5 10 10Q12 9 13.5 7L17.5 10.5Q15.5 12.5 13.5 13Q11 13 9 16Z" fill="url(#gb2)" stroke="#0f4a6e" stroke-width="0.9"/></svg>
<div class="t" style="left:51.0px;top:315.0px;font-size:11.5px;color:#000;">Surface Bodies(2)</div>
<svg class="s" style="left:26px;top:334px;" width="22" height="22" viewBox="0 0 22 22"><circle cx="3.5" cy="2.5" r="2" fill="#fff" stroke="#555" stroke-width="0.9"/><circle cx="3.5" cy="8" r="2" fill="#6ab8e0" stroke="#2f6f9f" stroke-width="0.9"/><circle cx="3.5" cy="14" r="2" fill="#f2c200" stroke="#8a6a00" stroke-width="0.9"/><path d="M7 2.5H19.5M7 8H19.5M7 14H12" stroke="#333" stroke-width="1.5"/><circle cx="16" cy="14.5" r="2.6" fill="#333"/><path d="M16 10.8V18.2M12.3 14.5H19.7M13.4 11.9L18.6 17.1M13.4 17.1L18.6 11.9" stroke="#333" stroke-width="1.4"/><circle cx="16" cy="14.5" r="1" fill="#f7f7f7"/></svg>
<div class="t" style="left:51.0px;top:337.0px;font-size:11.5px;color:#000;">Material &lt;not specified&gt;</div>
<svg class="s" style="left:26px;top:356px;" width="22" height="22" viewBox="0 0 22 22"><path d="M5.5 7.6L18 1.6V12.4L5.5 18.5Z" fill="url(#gb2)" stroke="#0f4a6e" stroke-width="1.1" stroke-linejoin="round"/><path d="M11.3 1V21" stroke="#111" stroke-width="1.4" stroke-dasharray="2.4 1.3"/></svg>
<div class="t" style="left:51.0px;top:359.0px;font-size:11.5px;color:#000;">Front Plane</div>
<svg class="s" style="left:26px;top:378px;" width="22" height="22" viewBox="0 0 22 22"><path d="M5.5 7.6L18 1.6V12.4L5.5 18.5Z" fill="url(#gb2)" stroke="#0f4a6e" stroke-width="1.1" stroke-linejoin="round"/><path d="M11.3 1V21" stroke="#111" stroke-width="1.4" stroke-dasharray="2.4 1.3"/></svg>
<div class="t" style="left:51.0px;top:381.0px;font-size:11.5px;color:#000;">Top Plane</div>
<svg class="s" style="left:26px;top:400px;" width="22" height="22" viewBox="0 0 22 22"><path d="M5.5 7.6L18 1.6V12.4L5.5 18.5Z" fill="url(#gb2)" stroke="#0f4a6e" stroke-width="1.1" stroke-linejoin="round"/><path d="M11.3 1V21" stroke="#111" stroke-width="1.4" stroke-dasharray="2.4 1.3"/></svg>
<div class="t" style="left:51.0px;top:403.0px;font-size:11.5px;color:#000;">Right Plane</div>
<svg class="s" style="left:26px;top:422px;" width="22" height="22" viewBox="0 0 22 22"><path d="M4 2.5V17.5H19" fill="none" stroke="#222" stroke-width="1.5"/><path d="M1.8 5.5L4 0.8L6.2 5.5Z M16.5 15.3L21.2 17.5L16.5 19.7Z" fill="#222"/></svg>
<div class="t" style="left:51.0px;top:425.0px;font-size:11.5px;color:#000;">Origin</div>
<svg class="s" style="left:11px;top:450px;" width="6" height="8" viewBox="0 0 6 8"><path d="M0.5 0.5L5 4L0.5 7.5Z" fill="#555"/></svg>
<svg class="s" style="left:26px;top:444px;" width="22" height="22" viewBox="0 0 22 22"><path d="M16.5 1.5H2.5V13Q2.5 18.5 8 18.5H20.5" fill="none" stroke="#3a3a3a" stroke-width="1.15"/></svg>
<div class="t" style="left:51.0px;top:447.0px;font-size:11.5px;color:#000;">Sketch1</div>
<svg class="s" style="left:11px;top:472px;" width="6" height="8" viewBox="0 0 6 8"><path d="M0.5 0.5L5 4L0.5 7.5Z" fill="#555"/></svg>
<svg class="s" style="left:26px;top:466px;" width="22" height="22" viewBox="0 0 22 22"><path d="M16.5 1.5H2.5V13Q2.5 18.5 8 18.5H20.5" fill="none" stroke="#3a3a3a" stroke-width="1.15"/></svg>
<div class="t" style="left:51.0px;top:469.0px;font-size:11.5px;color:#000;">Sketch2</div>
<svg class="s" style="left:26px;top:488px;" width="22" height="22" viewBox="0 0 22 22"><path d="M16.5 1.5H2.5V13Q2.5 18.5 8 18.5H20.5" fill="none" stroke="#3a3a3a" stroke-width="1.15"/></svg>
<div class="t" style="left:51.0px;top:491.0px;font-size:11.5px;color:#000;">Sketch3-sideElevationControl</div>
<svg class="s" style="left:26px;top:510px;" width="22" height="22" viewBox="0 0 22 22"><path d="M16.5 1.5H2.5V13Q2.5 18.5 8 18.5H20.5" fill="none" stroke="#3a3a3a" stroke-width="1.15"/></svg>
<div class="t" style="left:51.0px;top:513.0px;font-size:11.5px;color:#000;">Sketch4</div>
<svg class="s" style="left:26px;top:532px;" width="22" height="22" viewBox="0 0 22 22"><path d="M1 10.6C2.5 8.5 4.3 7.4 6 6.8C8 6.3 9.5 5 11.2 3.3L13 1.9L19 8.8C18 11 17 12.3 14 14.2C12 15 10 15.5 8 18.7Z" fill="url(#gb)" stroke="#0f4a6e" stroke-width="1.2" stroke-linejoin="round"/><path d="M13.2 0.8L17.4 5" stroke="#1a1a1a" stroke-width="2.3"/><path d="M20 3.2V8.9H14.3Z" fill="#1a1a1a"/></svg>
<div class="t" style="left:51.0px;top:535.0px;font-size:11.5px;color:#000;">Surface-Extrude1</div>
<svg class="s" style="left:26px;top:554px;" width="22" height="22" viewBox="0 0 22 22"><path d="M5.5 7.6L18 1.6V12.4L5.5 18.5Z" fill="url(#gb2)" stroke="#0f4a6e" stroke-width="1.1" stroke-linejoin="round"/><path d="M11.3 1V21" stroke="#111" stroke-width="1.4" stroke-dasharray="2.4 1.3"/></svg>
<div class="t" style="left:51.0px;top:557.0px;font-size:11.5px;color:#000;">Plane1</div>
<svg class="s" style="left:26px;top:576px;" width="22" height="22" viewBox="0 0 22 22"><path d="M16.5 1.5H2.5V13Q2.5 18.5 8 18.5H20.5" fill="none" stroke="#3a3a3a" stroke-width="1.15"/></svg>
<div class="t" style="left:51.0px;top:579.0px;font-size:11.5px;color:#000;">Sketch5</div>
<svg class="s" style="left:26px;top:598px;" width="22" height="22" viewBox="0 0 22 22"><path d="M1 10.6C2.5 8.5 4.3 7.4 6 6.8C8 6.3 9.5 5 11.2 3.3L13 1.9L19 8.8C18 11 17 12.3 14 14.2C12 15 10 15.5 8 18.7Z" fill="url(#gb)" stroke="#0f4a6e" stroke-width="1.2" stroke-linejoin="round"/><path d="M13.2 0.8L17.4 5" stroke="#1a1a1a" stroke-width="2.3"/><path d="M20 3.2V8.9H14.3Z" fill="#1a1a1a"/></svg>
<div class="t" style="left:51.0px;top:601.0px;font-size:11.5px;color:#000;">Surface-Extrude3</div>
<svg class="s" style="left:26px;top:620px;" width="22" height="22" viewBox="0 0 22 22"><path d="M16.5 1.5H2.5V13Q2.5 18.5 8 18.5H20.5" fill="none" stroke="#3a3a3a" stroke-width="1.15"/></svg>
<div class="t" style="left:51.0px;top:623.0px;font-size:11.5px;color:#000;">Sketch6</div>
<svg class="s" style="left:26px;top:642px;" width="22" height="22" viewBox="0 0 22 22"><path d="M1.5 11.5Q4 8 7 8.5Q9.5 8.5 12 3.5L19 9.5Q17 13 14 13.5Q11 14 8.5 18.5Z" fill="url(#gw)" stroke="#222" stroke-width="1.1" stroke-linejoin="round"/><path d="M1.5 11.5Q4 8 7 8.5Q9.5 8.5 12 3.5L16 7Q13.5 10 11 10.5Q8 11 5.5 14Z" fill="url(#gb2)" stroke="#0f4a6e" stroke-width="1"/><path d="M5.5 14Q8 11 11 10.5Q13.5 10 16 7" fill="none" stroke="#222" stroke-width="1.3"/></svg>
<div class="t" style="left:51.0px;top:645.0px;font-size:11.5px;color:#000;">Surface-Trim2</div>
<svg class="s" style="left:26px;top:664px;" width="22" height="22" viewBox="0 0 22 22"><path d="M16.5 1.5H2.5V13Q2.5 18.5 8 18.5H20.5" fill="none" stroke="#3a3a3a" stroke-width="1.15"/></svg>
<div class="t" style="left:51.0px;top:667.0px;font-size:11.5px;color:#000;">Sketch9</div>
<svg class="s" style="left:26px;top:686px;" width="22" height="22" viewBox="0 0 22 22"><path d="M16.5 1.5H2.5V13Q2.5 18.5 8 18.5H20.5" fill="none" stroke="#3a3a3a" stroke-width="1.15"/></svg>
<div class="t" style="left:51.0px;top:689.0px;font-size:11.5px;color:#000;">Sketch11</div>
<svg class="s" style="left:26px;top:708px;" width="22" height="22" viewBox="0 0 22 22"><path d="M5.5 7.6L18 1.6V12.4L5.5 18.5Z" fill="url(#gb2)" stroke="#0f4a6e" stroke-width="1.1" stroke-linejoin="round"/><path d="M11.3 1V21" stroke="#111" stroke-width="1.4" stroke-dasharray="2.4 1.3"/></svg>
<div class="t" style="left:51.0px;top:711.0px;font-size:11.5px;color:#000;">Plane3</div>
<svg class="s" style="left:26px;top:730px;" width="22" height="22" viewBox="0 0 22 22"><path d="M16.5 1.5H2.5V13Q2.5 18.5 8 18.5H20.5" fill="none" stroke="#3a3a3a" stroke-width="1.15"/></svg>
<div class="t" style="left:51.0px;top:733.0px;font-size:11.5px;color:#000;">Sketch15</div>
<svg class="s" style="left:26px;top:752px;" width="22" height="22" viewBox="0 0 22 22"><path d="M1.5 11.5Q4 8 7 8.5Q9.5 8.5 12 3.5L19 9.5Q17 13 14 13.5Q11 14 8.5 18.5Z" fill="url(#gw)" stroke="#222" stroke-width="1.1" stroke-linejoin="round"/><path d="M1.5 11.5Q4 8 7 8.5Q9.5 8.5 12 3.5L16 7Q13.5 10 11 10.5Q8 11 5.5 14Z" fill="url(#gb2)" stroke="#0f4a6e" stroke-width="1"/><path d="M5.5 14Q8 11 11 10.5Q13.5 10 16 7" fill="none" stroke="#222" stroke-width="1.3"/></svg>
<div class="t" style="left:51.0px;top:755.0px;font-size:11.5px;color:#000;">Surface-Trim3</div>
<svg class="s" style="left:26px;top:774px;" width="22" height="22" viewBox="0 0 22 22"><path d="M7 3V17M12 3V17M4 8H19M4 13H19" stroke="#e6e6e6" stroke-width="0.8"/><path d="M16.5 1.5H2.5V13Q2.5 18.5 8 18.5H20.5" fill="none" stroke="#2a72a6" stroke-width="1.6"/><text x="7" y="14.9" font-family="Liberation Sans" font-weight="bold" font-size="10" fill="#222" textLength="12.5" lengthAdjust="spacingAndGlyphs">3D</text></svg>
<div class="t" style="left:51.0px;top:777.0px;font-size:11.5px;color:#000;">3DSketch1</div>
<svg class="s" style="left:26px;top:796px;" width="22" height="22" viewBox="0 0 22 22"><path d="M1.5 10Q4.5 7 7 7.5Q9.5 7 12 2.5L19.5 9Q16.5 12 14 11.5Q11.5 12 8.5 18Z" fill="#cfcfcf" stroke="#a8a8a8" stroke-width="1.1" stroke-linejoin="round"/><path d="M4.5 12.5L11.5 5.5M7.5 15L14.5 9" stroke="#a8a8a8" stroke-width="0.9"/></svg>
<div class="t" style="left:51.0px;top:799.0px;font-size:11.5px;color:#9a9a9a;">Boundary-Surface6</div>
<svg class="s" style="left:26px;top:818px;" width="22" height="22" viewBox="0 0 22 22"><path d="M2.5 3Q4 1.5 7 2L10.5 3L14 2Q17 1.5 18.5 3Q18 4.5 17 5V18.5H4V5Q3 4.5 2.5 3Z" fill="#ececec" stroke="#a8a8a8" stroke-width="1.1"/><path d="M7.5 2L10.5 5.5L13.5 2M10.5 5.5V18.5" fill="none" stroke="#b0b0b0" stroke-width="1.2"/><path d="M9 8L12 9.5M9 11L12 12.5M9 14L12 15.5" stroke="#b0b0b0" stroke-width="1.4"/></svg>
<div class="t" style="left:51.0px;top:821.0px;font-size:11.5px;color:#9a9a9a;">Surface-Knit9</div>
<svg class="s" style="left:26px;top:840px;" width="22" height="22" viewBox="0 0 22 22"><path d="M2.4 18.4L19.7 1" stroke="#aaa" stroke-width="1.4" stroke-dasharray="2 1.3"/></svg>
<div class="t" style="left:51.0px;top:843.0px;font-size:11.5px;color:#9a9a9a;">Axis1</div>
<svg class="s" style="left:26px;top:862px;" width="22" height="22" viewBox="0 0 22 22"><path d="M5.5 7.6L18 1.6V12.4L5.5 18.5Z" fill="#c4c4c4" stroke="#8a8a8a" stroke-width="1.1" stroke-linejoin="round"/><path d="M11.3 1V21" stroke="#777" stroke-width="1.4" stroke-dasharray="2.4 1.3"/></svg>
<div class="t" style="left:51.0px;top:865.0px;font-size:11.5px;color:#9a9a9a;">Plane7</div>
<svg class="s" style="left:26px;top:884px;" width="22" height="22" viewBox="0 0 22 22"><path d="M7 3V17M12 3V17M4 8H19M4 13H19" stroke="#e6e6e6" stroke-width="0.8"/><path d="M16.5 1.5H2.5V13Q2.5 18.5 8 18.5H20.5" fill="none" stroke="#b4b4b4" stroke-width="1.15"/></svg>
<div class="t" style="left:51.0px;top:887.0px;font-size:11.5px;color:#9a9a9a;">Sketch19</div>
<svg class="s" style="left:26px;top:906px;" width="22" height="22" viewBox="0 0 22 22"><path d="M7 3V17M12 3V17M4 8H19M4 13H19" stroke="#e6e6e6" stroke-width="0.8"/><path d="M16.5 1.5H2.5V13Q2.5 18.5 8 18.5H20.5" fill="none" stroke="#b4b4b4" stroke-width="1.6"/><text x="7" y="14.9" font-family="Liberation Sans" font-weight="bold" font-size="10" fill="#b0b0b0" textLength="12.5" lengthAdjust="spacingAndGlyphs">3D</text></svg>
<div class="t" style="left:51.0px;top:909.0px;font-size:11.5px;color:#9a9a9a;">3DSketch3</div>
<svg class="s" style="left:26px;top:928px;" width="22" height="22" viewBox="0 0 22 22"><path d="M5.5 7.6L18 1.6V12.4L5.5 18.5Z" fill="#c4c4c4" stroke="#8a8a8a" stroke-width="1.1" stroke-linejoin="round"/><path d="M11.3 1V21" stroke="#777" stroke-width="1.4" stroke-dasharray="2.4 1.3"/></svg>
<div class="t" style="left:51.0px;top:931.0px;font-size:11.5px;color:#9a9a9a;">Plane8</div>
<svg class="s" style="left:26px;top:950px;" width="22" height="22" viewBox="0 0 22 22"><path d="M7 3V17M12 3V17M4 8H19M4 13H19" stroke="#e6e6e6" stroke-width="0.8"/><path d="M16.5 1.5H2.5V13Q2.5 18.5 8 18.5H20.5" fill="none" stroke="#b4b4b4" stroke-width="1.15"/></svg>
<div class="t" style="left:51.0px;top:953.0px;font-size:11.5px;color:#9a9a9a;">Sketch20</div>
<svg class="s" style="left:26px;top:972px;" width="22" height="22" viewBox="0 0 22 22"><path d="M7.5 3Q11 4 14.5 3V12L18 14.5L11 19L4 14.5L7.5 12Z" fill="#c8c8c8" stroke="#a8a8a8" stroke-width="1.1" stroke-linejoin="round"/></svg>
<div class="t" style="left:51.0px;top:975.0px;font-size:11.5px;color:#9a9a9a;">Surface-Loft1</div>
<svg class="s" style="left:26px;top:994px;" width="22" height="22" viewBox="0 0 22 22"><path d="M7 3V17M12 3V17M4 8H19M4 13H19" stroke="#e6e6e6" stroke-width="0.8"/><path d="M16.5 1.5H2.5V13Q2.5 18.5 8 18.5H20.5" fill="none" stroke="#b4b4b4" stroke-width="1.15"/></svg>
<div class="t" style="left:51.0px;top:997.0px;font-size:11.5px;color:#9a9a9a;">Sketch22</div>
<svg class="s" style="left:26px;top:1016px;" width="22" height="22" viewBox="0 0 22 22"><path d="M7 3V17M12 3V17M4 8H19M4 13H19" stroke="#e6e6e6" stroke-width="0.8"/><path d="M16.5 1.5H2.5V13Q2.5 18.5 8 18.5H20.5" fill="none" stroke="#b4b4b4" stroke-width="1.15"/></svg>
<div class="t" style="left:51.0px;top:1019.0px;font-size:11.5px;color:#9a9a9a;">Sketch23</div>
<svg class="s" style="left:26px;top:1038px;" width="22" height="22" viewBox="0 0 22 22"><path d="M7.5 3Q11 4 14.5 3V12L18 14.5L11 19L4 14.5L7.5 12Z" fill="#c8c8c8" stroke="#a8a8a8" stroke-width="1.1" stroke-linejoin="round"/></svg>
<div class="t" style="left:51.0px;top:1041.0px;font-size:11.5px;color:#9a9a9a;">Surface-Loft2</div>
<div class="r" style="left:2px;top:794px;width:279px;height:3px;background:#3587c4;"></div>
<svg class="s" style="left:10px;top:760px;" width="115" height="44" viewBox="0 0 115 44"><rect x="2.6" y="2.6" width="110.2" height="39.4" rx="15" ry="11" fill="none" stroke="#1fae3c" stroke-width="2.7"/></svg>
<div class="r" style="left:1px;top:1053px;width:281px;height:16px;background:#efefef;"></div>
<div class="r" style="left:19px;top:1054px;width:210px;height:14px;background:#cdcdcd;"></div>
<svg class="s" style="left:5px;top:1055px;" width="10" height="12" viewBox="0 0 10 12"><path d="M7 2L3 6L7 10" fill="none" stroke="#555" stroke-width="1.8"/></svg>
<svg class="s" style="left:267px;top:1055px;" width="10" height="12" viewBox="0 0 10 12"><path d="M3 2L7 6L3 10" fill="none" stroke="#555" stroke-width="1.8"/></svg>
<div class="r" style="left:1px;top:1072px;width:298px;height:1px;background:#cfcfcf;"></div>
<div class="r" style="left:297px;top:147px;width:2px;height:926px;background:#f9f9f9;"></div>
<div class="r" style="left:299px;top:580px;width:9px;height:39px;background:#f5f5f5;border:1px solid #7a7a7a;border-left:none;box-sizing:border-box"></div>
<svg class="s" style="left:299px;top:595px;" width="8" height="8" viewBox="0 0 8 8"><circle cx="3.8" cy="4" r="2.6" fill="#dcdcdc" stroke="#999" stroke-width="0.9"/></svg>
<svg class="s" style="left:0px;top:0px;" width="1958" height="1110" viewBox="0 0 1958 1110">
<defs>
<linearGradient id="g1" gradientUnits="userSpaceOnUse" x1="546" y1="551.5" x2="641" y2="790">
<stop offset="0" stop-color="#c3c3fd"/><stop offset="0.22" stop-color="#bdbdf8"/><stop offset="0.45" stop-color="#a2a2d6"/>
<stop offset="0.65" stop-color="#8e8ebe"/><stop offset="0.85" stop-color="#77779e"/><stop offset="1" stop-color="#5c5c7a"/>
</linearGradient>
<linearGradient id="g2" gradientUnits="userSpaceOnUse" x1="1173.4" y1="584.5" x2="1068" y2="752">
<stop offset="0" stop-color="#aaaadb"/><stop offset="0.12" stop-color="#b8b8f0"/><stop offset="0.33" stop-color="#bfbff9"/>
<stop offset="0.48" stop-color="#c8c8fd"/><stop offset="0.58" stop-color="#a9a9d9"/><stop offset="0.72" stop-color="#8686ae"/>
<stop offset="0.86" stop-color="#66668b"/><stop offset="1" stop-color="#545472"/>
</linearGradient>
<linearGradient id="gd1" gradientUnits="userSpaceOnUse" x1="540" y1="555" x2="560" y2="610">
<stop offset="0" stop-color="#3b3b4f"/><stop offset="1" stop-color="#5e5e7e"/>
</linearGradient>
<linearGradient id="gd2" gradientUnits="userSpaceOnUse" x1="1610" y1="860" x2="1570" y2="880">
<stop offset="0" stop-color="#3b3b4f"/><stop offset="1" stop-color="#5e5e7e"/>
</linearGradient>
</defs>
<path d="M509.00 615.30C509.30 612.37 509.90 603.05 510.80 597.70C511.70 592.35 512.83 587.65 514.40 583.20C515.97 578.75 517.80 574.83 520.20 571.00C522.60 567.17 525.57 563.15 528.80 560.20C532.03 557.25 535.98 554.75 539.60 553.30C543.22 551.85 546.88 551.62 550.50 551.50C554.12 551.38 557.70 551.87 561.30 552.60C564.90 553.33 568.50 554.40 572.10 555.90C575.70 557.40 579.30 559.45 582.90 561.60C586.50 563.75 590.22 566.15 593.70 568.80C597.18 571.45 602.12 576.05 603.80 577.50L509 615.3Z" fill="url(#gd1)" stroke="#1284cc" stroke-width="1.15"/>
<path d="M543.2 552.3L1174.10 301.70C1176.05 301.32 1181.72 299.50 1185.80 299.40C1189.88 299.30 1194.12 299.83 1198.60 301.10C1203.08 302.37 1207.82 304.37 1212.70 307.00C1217.58 309.63 1223.02 313.10 1227.90 316.90C1232.78 320.70 1237.70 325.50 1242.00 329.80C1246.30 334.10 1249.80 337.82 1253.70 342.70C1257.60 347.58 1261.50 353.05 1265.40 359.10C1269.30 365.15 1273.22 372.10 1277.10 379.00C1280.98 385.90 1285.02 393.10 1288.70 400.50C1292.38 407.90 1296.08 415.68 1299.20 423.40C1302.32 431.12 1305.25 439.38 1307.40 446.80C1309.55 454.22 1310.83 460.87 1312.10 467.90C1313.37 474.93 1314.32 482.75 1315.00 489.00C1315.68 495.25 1316.07 499.93 1316.20 505.40C1316.33 510.87 1315.87 519.07 1315.80 521.80L1187.80 572.20C1187.67 570.28 1187.73 567.00 1187.00 560.70C1186.27 554.40 1185.17 543.18 1183.40 534.40C1181.63 525.62 1179.63 517.38 1176.40 508.00C1173.17 498.62 1168.98 488.05 1164.00 478.10C1159.02 468.15 1152.33 457.37 1146.50 448.30C1140.67 439.23 1134.85 430.73 1129.00 423.70C1123.15 416.67 1117.27 411.52 1111.40 406.10C1105.53 400.68 1096.73 393.68 1093.80 391.20L800.00 507.60C802.77 509.93 809.93 515.05 816.60 521.60C823.27 528.15 833.08 538.48 840.00 546.90C846.92 555.32 852.07 562.48 858.10 572.10C864.13 581.72 871.08 593.17 876.20 604.60C881.32 616.03 885.95 629.58 888.80 640.70C891.65 651.82 892.47 663.13 893.30 671.30C894.13 679.47 893.72 686.63 893.80 689.70L683.20 772.90C682.87 767.78 682.85 752.93 681.20 742.20C679.55 731.47 676.93 721.05 673.30 708.50C669.67 695.95 665.02 681.08 659.40 666.90C653.78 652.72 646.17 635.67 639.60 623.40C633.03 611.13 625.97 600.95 620.00 593.30C614.03 585.65 608.18 581.58 603.80 577.50C599.42 573.42 597.18 571.45 593.70 568.80C590.22 566.15 586.50 563.75 582.90 561.60C579.30 559.45 575.70 557.40 572.10 555.90C568.50 554.40 564.90 553.33 561.30 552.60C557.70 551.87 553.52 551.55 550.50 551.50C547.48 551.45 544.42 552.17 543.20 552.30Z" fill="url(#g1)" stroke="#1284cc" stroke-width="1.15"/>
<path d="M543.2 552.3L1174.1 301.7" stroke="#111" stroke-width="1.1"/>
<path d="M1555.30 853.70C1559.48 853.08 1572.50 850.05 1580.40 850.00C1588.30 849.95 1596.98 851.57 1602.70 853.40C1608.42 855.23 1611.57 857.43 1614.70 861.00C1617.83 864.57 1619.78 868.93 1621.50 874.80C1623.22 880.67 1624.42 892.63 1625.00 896.20L1555.3 853.7Z" fill="url(#gd2)" stroke="#1284cc" stroke-width="1.15"/>
<path d="M997.30 706.70C997.80 702.35 998.52 690.05 1000.30 680.60C1002.08 671.15 1004.17 659.95 1008.00 650.00C1011.83 640.05 1018.20 628.57 1023.30 620.90C1028.40 613.23 1032.22 609.37 1038.60 604.00C1044.98 598.63 1052.67 593.03 1061.60 588.70C1070.53 584.37 1081.98 580.42 1092.20 578.00C1102.42 575.58 1113.95 574.70 1122.90 574.20C1131.85 573.70 1138.23 573.60 1145.90 575.00C1153.57 576.40 1164.32 581.02 1168.90 582.60C1173.48 584.18 1172.65 584.18 1173.40 584.50L1602.70 853.40C1598.98 852.83 1588.30 849.95 1580.40 850.00C1572.50 850.05 1559.48 853.08 1555.30 853.70C1552.18 854.78 1543.33 856.95 1536.60 860.20C1529.87 863.45 1521.40 868.38 1514.90 873.20C1508.40 878.02 1502.88 883.08 1497.60 889.10C1492.32 895.12 1487.28 902.57 1483.20 909.30C1479.12 916.03 1475.98 922.28 1473.10 929.50C1470.22 936.72 1467.70 945.38 1465.90 952.60C1464.10 959.82 1463.22 965.60 1462.30 972.80C1461.38 980.00 1460.72 991.97 1460.40 995.80Z" fill="url(#g2)" stroke="#1284cc" stroke-width="1.15"/>
<path d="M1173.4 584.5L1602.7 853.4" stroke="#111" stroke-width="1.1"/>
<ellipse cx="865" cy="480.3" rx="15.6" ry="24.8" fill="none" stroke="#1fae3c" stroke-width="2.6"/><path d="M865.9 476.6L869.4 478.1L872.9 476.6V485.6L869.4 484.1L865.9 485.6Z" fill="#ff0000"/><ellipse cx="988" cy="436.3" rx="24.3" ry="15.6" fill="none" stroke="#1fae3c" stroke-width="2.6"/><path d="M984.9 429.7L988.4 431.2L991.9 429.7V438.7L988.4 437.2L984.9 438.7Z" fill="#ff0000"/><ellipse cx="1027.9" cy="618.6" rx="14.5" ry="16" fill="none" stroke="#1fae3c" stroke-width="2.6"/><path d="M1021.8 615.6L1025.3 617.1L1028.8 615.6V624.6L1025.3 623.1L1021.8 624.6Z" fill="#ff0000"/><ellipse cx="1146.6" cy="576.4" rx="20" ry="17" fill="none" stroke="#1fae3c" stroke-width="2.6"/><path d="M1140.8 571.2L1144.3 572.7L1147.8 571.2V580.2L1144.3 578.7L1140.8 580.2Z" fill="#ff0000"/></svg>
<svg class="s" style="left:952px;top:130px;" width="20" height="20" viewBox="0 0 20 20"><circle cx="12" cy="8" r="6.5" fill="#f4f4f4" stroke="#777" stroke-width="1.3"/><path d="M12 3.5L10.5 5.5H13.5ZM12 12.5L10.5 10.5H13.5ZM7.5 8L9.5 6.5V9.5ZM16.5 8L14.5 6.5V9.5Z" fill="#555"/><path d="M7 13L2.5 17.5" stroke="#4a90b8" stroke-width="3" stroke-linecap="round"/></svg>
<svg class="s" style="left:977px;top:130px;" width="20" height="20" viewBox="0 0 20 20"><rect x="6.5" y="0.5" width="12.5" height="12.5" fill="none" stroke="#555" stroke-width="1" stroke-dasharray="2 1.3"/><circle cx="10.5" cy="8.5" r="6" fill="#f0f0f0" stroke="#777" stroke-width="1.3"/><path d="M6 13L2 17.5" stroke="#4a90b8" stroke-width="3" stroke-linecap="round"/></svg>
<svg class="s" style="left:1004px;top:130px;" width="19" height="19" viewBox="0 0 19 19"><path d="M2 14L13 3L17 7L6 18Z" fill="#e8e8e8" stroke="#777" stroke-width="1.2"/><ellipse cx="4" cy="16" rx="2.5" ry="2" fill="#ddd" stroke="#777"/><path d="M18 14H10" stroke="#4a90b8" stroke-width="2.2"/><path d="M8 14L11.5 11V17Z" fill="#4a90b8"/></svg>
<svg class="s" style="left:1030px;top:130px;" width="18" height="19" viewBox="0 0 18 19"><path d="M1 4Q9 0 17 4V18H12V9Q9 6.5 6 9V18H1Z" fill="#5a9fc8" stroke="#555" stroke-width="1.1"/><path d="M6 9Q9 6.5 12 9V18H6Z" fill="#ddd" stroke="#555" stroke-width="1"/><path d="M2 9L5 6M2 13L5 10M2 17L5 14M13 9L16 6M13 13L16 10M13 17L16 14" stroke="#cfe8f5" stroke-width="0.9"/></svg>
<svg class="s" style="left:1055px;top:130px;" width="19" height="19" viewBox="0 0 19 19"><path d="M2 4L7 0.5H11L8 4Z" fill="#f0a020"/><path d="M3 15L13 5L17 9L7 19Z" fill="#e8e8e8" stroke="#777" stroke-width="1.2"/><path d="M9 3L6 8H10L7 12" fill="#f5d030" stroke="#e07020" stroke-width="1"/><text x="10" y="19" font-family="Liberation Serif" font-size="10" font-weight="bold" fill="#4a90b8">A</text></svg>
<svg class="s" style="left:1082px;top:130px;" width="18" height="19" viewBox="0 0 18 19"><path d="M1.5 5.5L5.5 1.5H17V14L13 18H1.5Z" fill="#fff" stroke="#555" stroke-width="1"/><rect x="1.5" y="5.5" width="11.5" height="12.5" fill="#8cc8ea" stroke="#2f6f9f" stroke-width="1"/><path d="M13 5.5L17 1.5M13 18L17 14" stroke="#555" stroke-width="1"/></svg>
<svg class="s" style="left:1106px;top:138px;" width="8" height="5" viewBox="0 0 8 5"><path d="M0 0H8L4 4.5Z" fill="#888"/></svg>
<svg class="s" style="left:1122px;top:130px;" width="18" height="19" viewBox="0 0 18 19"><path d="M1 4L9 1L17 4V15L9 18L1 15Z" fill="#fff" stroke="#555" stroke-width="1"/><path d="M1 4L9 7V18L1 15Z" fill="#7bbde2" stroke="#555" stroke-width="1"/><path d="M9 7L17 4" stroke="#555" stroke-width="1"/><path d="M3 6V15" stroke="#cfe8f5" stroke-width="1.5"/></svg>
<svg class="s" style="left:1146px;top:138px;" width="8" height="5" viewBox="0 0 8 5"><path d="M0 0H8L4 4.5Z" fill="#888"/></svg>
<svg class="s" style="left:1162px;top:130px;" width="19" height="19" viewBox="0 0 19 19"><ellipse cx="9.5" cy="9.5" rx="8.5" ry="5" fill="#f4f4f4" stroke="#999" stroke-width="1.1"/><circle cx="9.5" cy="9" r="3.5" fill="#777"/><path d="M9.5 1V18" stroke="#555" stroke-width="1.3"/></svg>
<svg class="s" style="left:1186px;top:138px;" width="8" height="5" viewBox="0 0 8 5"><path d="M0 0H8L4 4.5Z" fill="#888"/></svg>
<svg class="s" style="left:1202px;top:129px;" width="21" height="21" viewBox="0 0 21 21"><circle cx="8" cy="8" r="7.5" fill="#e8c020"/><path d="M8 8L0.5 8A7.5 7.5 0 0 1 8 0.5Z" fill="#3a7fd8"/><path d="M8 8L8 0.5A7.5 7.5 0 0 1 14.375 6.5Z" fill="#e03a30"/><path d="M8 8L0.5 8A7.5 7.5 0 0 0 7.25 15.5Z" fill="#3bb03b"/><circle cx="8" cy="8" r="7.5" fill="url(#gball)"/><path d="M9 18L11 13L18 6L20.5 8.5L13.5 15.5Z" fill="#f5d040" stroke="#444" stroke-width="0.9"/><path d="M18 6L19 5L21.5 7.5L20.5 8.5Z" fill="#e04040"/></svg>
<svg class="s" style="left:1226px;top:129px;" width="20" height="21" viewBox="0 0 20 21"><rect x="0.5" y="11" width="19" height="9.5" fill="#222"/><path d="M2.5 13H5V15.5H2.5ZM8.5 13H11V15.5H8.5ZM14.5 13H17V15.5H14.5ZM5 17H7.5V19.5H5ZM11 17H13.5V19.5H11Z" fill="#fff"/><circle cx="10" cy="8" r="7.5" fill="#e8c020"/><path d="M10 8L2.5 8A7.5 7.5 0 0 1 10 0.5Z" fill="#3a7fd8"/><path d="M10 8L10 0.5A7.5 7.5 0 0 1 16.375 6.5Z" fill="#e03a30"/><path d="M10 8L2.5 8A7.5 7.5 0 0 0 9.25 15.5Z" fill="#3bb03b"/><circle cx="10" cy="8" r="7.5" fill="url(#gball)"/></svg>
<svg class="s" style="left:1252px;top:138px;" width="8" height="5" viewBox="0 0 8 5"><path d="M0 0H8L4 4.5Z" fill="#888"/></svg>
<svg class="s" style="left:1267px;top:131px;" width="19" height="17" viewBox="0 0 19 17"><rect x="1" y="1" width="17" height="11" fill="#e8e8e8" stroke="#555" stroke-width="1.3"/><path d="M9.5 12V15M5.5 15.5H13.5" stroke="#555" stroke-width="1.6"/></svg>
<svg class="s" style="left:1293px;top:138px;" width="8" height="5" viewBox="0 0 8 5"><path d="M0 0H8L4 4.5Z" fill="#888"/></svg>
<svg class="s" style="left:1826px;top:133px;" width="12" height="13" viewBox="0 0 12 13"><rect x="0.5" y="0.5" width="11" height="12" fill="none" stroke="#aaa"/><path d="M3 6.5L7 3.5V9.5Z" fill="#aaa"/></svg>
<svg class="s" style="left:1852px;top:133px;" width="12" height="13" viewBox="0 0 12 13"><rect x="0.5" y="0.5" width="11" height="12" fill="none" stroke="#aaa"/><path d="M9 6.5L5 3.5V9.5Z" fill="#aaa"/></svg>
<div class="r" style="left:1879px;top:145px;width:10px;height:2px;background:#aaa;"></div>
<svg class="s" style="left:1903px;top:133px;" width="15" height="13" viewBox="0 0 15 13"><rect x="5.5" y="0.5" width="9" height="7.5" fill="#fff" stroke="#aaa"/><rect x="5.5" y="0.5" width="9" height="1.5" fill="#aaa"/><rect x="0.5" y="5" width="9" height="7.5" fill="#fff" stroke="#aaa"/><rect x="0.5" y="5" width="9" height="1.5" fill="#aaa"/></svg>
<svg class="s" style="left:1931px;top:134px;" width="11" height="11" viewBox="0 0 11 11"><path d="M0.5 0.5L10.5 10.5M10.5 0.5L0.5 10.5" stroke="#999" stroke-width="1"/></svg>
<div class="r" style="left:1931px;top:201px;width:26px;height:192px;background:#d4d4d4;"></div>
<div class="r" style="left:1932px;top:202px;width:25px;height:22px;background:#ffffff;"></div>
<div class="r" style="left:1931px;top:201px;width:1px;height:192px;background:#a0a0a0;"></div>
<div class="r" style="left:1931px;top:201px;width:26px;height:1px;background:#a0a0a0;"></div>
<div class="r" style="left:1931px;top:224px;width:26px;height:1px;background:#a0a0a0;"></div>
<div class="r" style="left:1931px;top:248px;width:26px;height:1px;background:#a0a0a0;"></div>
<div class="r" style="left:1931px;top:272px;width:26px;height:1px;background:#a0a0a0;"></div>
<div class="r" style="left:1931px;top:297px;width:26px;height:1px;background:#a0a0a0;"></div>
<div class="r" style="left:1931px;top:321px;width:26px;height:1px;background:#a0a0a0;"></div>
<div class="r" style="left:1931px;top:345px;width:26px;height:1px;background:#a0a0a0;"></div>
<div class="r" style="left:1931px;top:369px;width:26px;height:1px;background:#a0a0a0;"></div>
<div class="r" style="left:1931px;top:393px;width:26px;height:1px;background:#a0a0a0;"></div>
<svg class="s" style="left:1934px;top:204px;" width="20" height="18" viewBox="0 0 20 18"><path d="M1.5 9L10 1.5L18.5 9" fill="none" stroke="#1f5a80" stroke-width="2"/><path d="M4 8V17H16V8" fill="none" stroke="#333" stroke-width="1.5"/><rect x="8.5" y="11" width="3.5" height="6" fill="none" stroke="#333" stroke-width="1.2"/></svg>
<svg class="s" style="left:1935px;top:227px;" width="18" height="19" viewBox="0 0 18 19"><path d="M2 4L6 2V17L2 18ZM6 4L10 2V17L6 18ZM10 4L14 2V17L10 18Z" fill="#f4f4f4" stroke="#333" stroke-width="1.1"/></svg>
<svg class="s" style="left:1934px;top:251px;" width="20" height="18" viewBox="0 0 20 18"><path d="M1.5 2H7L8.5 4H15V7" fill="#eee" stroke="#333" stroke-width="1.1"/><path d="M1.5 2V16H14.5L18.5 7H5.5L1.5 16" fill="#f4f4f4" stroke="#333" stroke-width="1.1"/></svg>
<svg class="s" style="left:1934px;top:275px;" width="20" height="19" viewBox="0 0 20 19"><rect x="1.5" y="1.5" width="17" height="16" rx="1.5" fill="#fff" stroke="#333" stroke-width="1.1"/><path d="M4 4H8V8H11V5H15V8H11V11H8V15H4V11H8V8H4Z" fill="#f2c200" stroke="#6a5000" stroke-width="0.6"/><rect x="13" y="10" width="3" height="6" fill="#999"/></svg>
<svg class="s" style="left:1934px;top:299px;" width="20" height="20" viewBox="0 0 20 20"><circle cx="10" cy="10" r="8.5" fill="#e8c020"/><path d="M10 10L1.5 10A8.5 8.5 0 0 1 10 1.5Z" fill="#3a7fd8"/><path d="M10 10L10 1.5A8.5 8.5 0 0 1 17.225 8.3Z" fill="#e03a30"/><path d="M10 10L1.5 10A8.5 8.5 0 0 0 9.15 18.5Z" fill="#3bb03b"/><circle cx="10" cy="10" r="8.5" fill="url(#gball)"/></svg>
<svg class="s" style="left:1934px;top:324px;" width="20" height="19" viewBox="0 0 20 19"><rect x="1.5" y="1.5" width="17" height="16" rx="1.5" fill="#fff" stroke="#333" stroke-width="1.1"/><rect x="1.5" y="1.5" width="17" height="3" fill="#5aa5cc"/><rect x="4" y="7" width="3.5" height="2" fill="#2f6f9f"/><rect x="4" y="10.5" width="3.5" height="2" fill="#2f6f9f"/><rect x="4" y="14" width="3.5" height="2" fill="#2f6f9f"/><path d="M9 8H16M9 11.5H16M9 15H16" stroke="#222" stroke-width="1.1"/></svg>
<svg class="s" style="left:1934px;top:348px;" width="20" height="20" viewBox="0 0 20 20"><circle cx="10" cy="10" r="9" fill="#0e3a6a"/><circle cx="10" cy="10" r="7" fill="#2060a0"/><circle cx="10" cy="10" r="4" fill="#f0f8ff" opacity="0.9"/><path d="M8.5 7.5L12.5 10L8.5 12.5Z" fill="#2060a0"/></svg>
<svg class="s" style="left:1934px;top:371px;" width="20" height="20" viewBox="0 0 20 20"><rect x="1.5" y="1.5" width="14" height="11" fill="#fff" stroke="#333" stroke-width="1.1"/><path d="M4 5H13M4 8H10" stroke="#2f6f9f" stroke-width="1.5"/><path d="M8 13L12 10L18 12.5V18L13 20L8 17Z" fill="#f5d43a" stroke="#7a5c12" stroke-width="0.9"/><path d="M12 14L17 11.5V17L12 19.5Z" fill="#5aa5cc"/></svg>
<svg class="s" style="left:300px;top:980px;" width="50" height="55" viewBox="0 0 50 55">
<path d="M39.8 3.2L44.6 8.8M44.6 3.2L39.8 8.8" stroke="#ff4a4a" stroke-width="1.1"/>
<path d="M17.6 11.2L19.8 14.4L22 11.2M19.8 14.4V17.8" fill="none" stroke="#4aaa4a" stroke-width="1.1"/>
<path d="M8.8 43.2H13.6L8.8 49H13.6" fill="none" stroke="#4a4aff" stroke-width="1.1"/>
<path d="M41.2 37.5L41.4 21.5" stroke="#a00000" stroke-width="3.4"/><path d="M37.2 22.5H45L41.5 13.2Z" fill="#a00000"/>
<path d="M41 37.2L27 24.5" stroke="#005500" stroke-width="3.8"/><path d="M23.2 21.4L30.8 22.4L31 27.5L27.5 29.8L24 26.5Z" fill="#005500"/>
<path d="M41 37L24 44.8" stroke="#0000aa" stroke-width="3.8"/><path d="M15 46.5L23.5 40L25 48.2Z" fill="#0000aa"/>
</svg>
<div class="r" style="left:1px;top:1073px;width:298px;height:1px;background:#ffffff;"></div>
<div class="r" style="left:1px;top:1074px;width:298px;height:1px;background:#d4d4d4;"></div>
<div class="r" style="left:1px;top:1075px;width:1956px;height:15px;background:#f5f5f5;"></div>
<div class="r" style="left:300px;top:1075px;width:1657px;height:1px;background:#808080;"></div>
<div class="r" style="left:28px;top:1075px;width:64px;height:15px;background:#a6a6a6;"></div>
<div class="r" style="left:28px;top:1075px;width:64px;height:2px;background:#2a2a2a;"></div>
<div class="r" style="left:44px;top:1077px;width:1px;height:13px;background:#d8d8d8;"></div>
<div class="r" style="left:60px;top:1077px;width:1px;height:13px;background:#d8d8d8;"></div>
<div class="r" style="left:76px;top:1077px;width:1px;height:13px;background:#d8d8d8;"></div>
<svg class="s" style="left:28px;top:1077px;" width="64" height="13" viewBox="0 0 64 13"><path d="M4.5 2V11M11 2L5.5 6.5L11 11Z M27 2L21.5 6.5L27 11Z M37 2L42.5 6.5L37 11Z M53 2L58.5 6.5L53 11Z M59.5 2V11" fill="#888" stroke="#888" stroke-width="1"/></svg>
<div class="r" style="left:150px;top:1075px;width:175px;height:15px;background:#d5d5d5;"></div>
<div class="r" style="left:92px;top:1075px;width:58px;height:15px;background:#fafafa;"></div>
<div class="r" style="left:150px;top:1075px;width:175px;height:1px;background:#8e8e8e;"></div>
<div class="r" style="left:150px;top:1075px;width:1px;height:15px;background:#8e8e8e;"></div>
<div class="r" style="left:217px;top:1075px;width:1px;height:15px;background:#8e8e8e;"></div>
<div class="r" style="left:325px;top:1075px;width:1px;height:15px;background:#8e8e8e;"></div>
<div class="r" style="left:1955px;top:1076px;width:2px;height:14px;background:#9ab8bc;"></div>
<div class="r" style="left:1px;top:1076px;width:2px;height:14px;background:#9ab8bc;"></div>
<div class="t" style="left:105.5px;top:1074.0px;font-size:11.5px;color:#000;font-weight:bold;transform:scaleX(1.0234);transform-origin:0 0;">Model</div>
<div class="t" style="left:160.0px;top:1074.0px;font-size:11.5px;color:#000;transform:scaleX(0.9718);transform-origin:0 0;">3D Views</div>
<div class="t" style="left:227.0px;top:1074.0px;font-size:11.5px;color:#000;transform:scaleX(1.0429);transform-origin:0 0;">Motion Study 1</div>
<div class="r" style="left:1px;top:1090px;width:1956px;height:1px;background:#8e8e8e;"></div>
<div class="r" style="left:1px;top:1091px;width:1956px;height:18px;background:#f5f5f5;"></div>
<div class="r" style="left:0px;top:1109px;width:1958px;height:1px;background:#5e5e5e;"></div>
<div class="t" style="left:2.0px;top:1092.6px;font-size:12px;color:#000;transform:scaleX(0.9157);transform-origin:0 0;">SOLIDWORKS Premium 2023 SP3.0</div>
<div class="t" style="left:1653.0px;top:1092.6px;font-size:12px;color:#000;transform:scaleX(0.9833);transform-origin:0 0;">Editing Part</div>
<div class="t" style="left:1832.0px;top:1092.6px;font-size:12px;color:#000;transform:scaleX(0.9644);transform-origin:0 0;">MMGS</div>
<svg class="s" style="left:1741px;top:1092px;" width="18" height="17" viewBox="0 0 18 17"><path d="M5.5 1L10 9H1Z" fill="#f5c800" stroke="#333" stroke-width="0.8"/><path d="M5.5 4V6.5" stroke="#222" stroke-width="1.2"/><path d="M4 15V12M8 15V10M12 15V8" stroke="#1f5a80" stroke-width="2"/><path d="M7 9Q11 7 13 3" fill="none" stroke="#222" stroke-width="1.5"/><path d="M10.5 3.5L14.5 1.5L14 6Z" fill="#222"/></svg>
<svg class="s" style="left:1885px;top:1097px;" width="8" height="5" viewBox="0 0 8 5"><path d="M0.5 4.5L4 0.5L7.5 4.5Z" fill="#333"/></svg>
<svg class="s" style="left:1918px;top:1092px;" width="18" height="16" viewBox="0 0 18 16"><path d="M1.5 6L7 1.5L16.5 7.5L11 13.5Z" fill="#fff" stroke="#333" stroke-width="1.1"/><path d="M1.5 6V9L11 15.5L16.5 10V7.5" fill="#ddd" stroke="#333" stroke-width="1"/><circle cx="8" cy="6" r="1.5" fill="none" stroke="#333" stroke-width="0.9"/><path d="M9 8.5L11.5 10" stroke="#333" stroke-width="1.1"/></svg>
<svg class="s" style="left:1944px;top:1096px;" width="12" height="12" viewBox="0 0 12 12"><path d="M9 3H11V5H9ZM6 6H8V8H6ZM9 6H11V8H9ZM3 9H5V11H3ZM6 9H8V11H6ZM9 9H11V11H9Z" fill="#bbb"/></svg>
<div class="r" style="left:0px;top:0px;width:1px;height:1110px;background:#5e5e5e;"></div>
<div class="r" style="left:1957px;top:0px;width:1px;height:1110px;background:#6a6a6a;"></div>
<div class="r" style="left:1957px;top:4px;width:1px;height:12px;background:#1a1a1a;"></div>
</body></html>
